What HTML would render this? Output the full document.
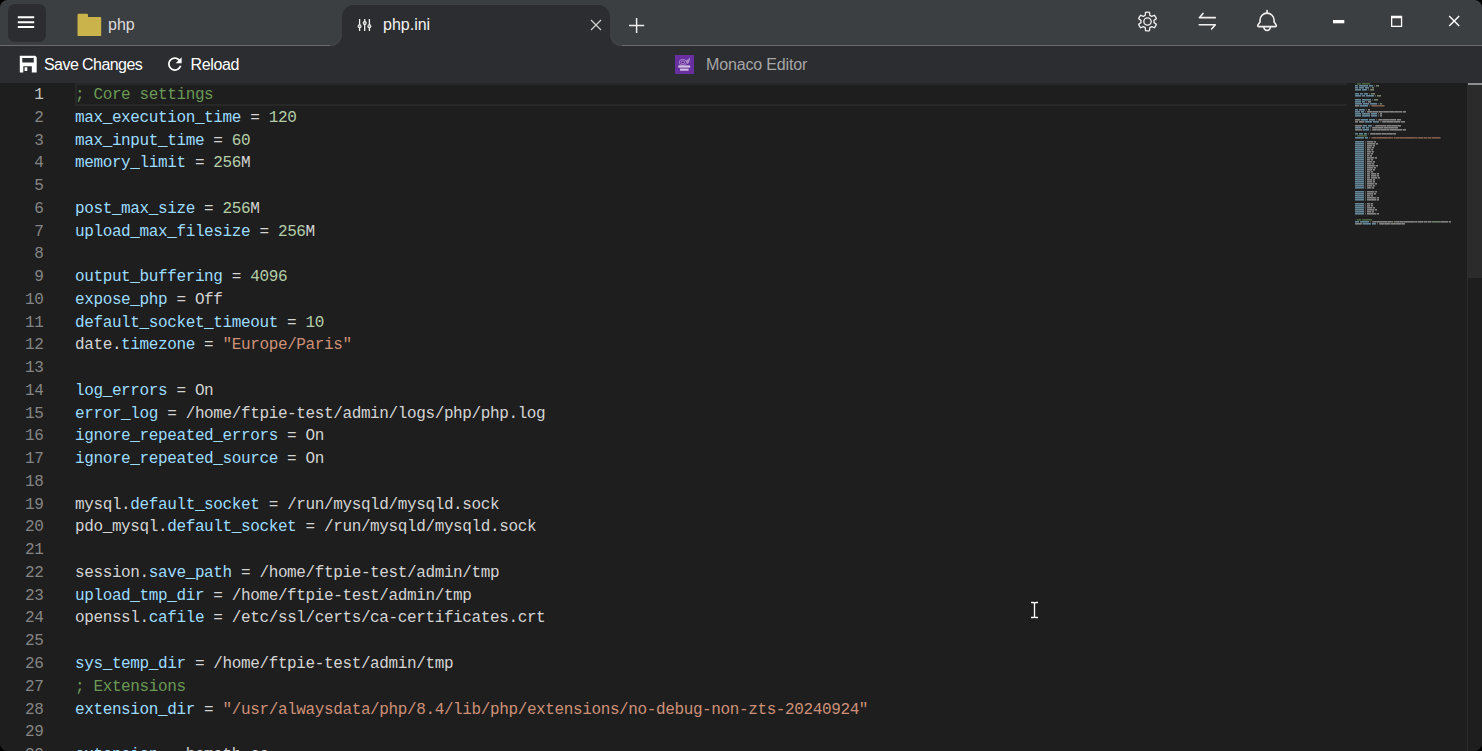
<!DOCTYPE html>
<html><head><meta charset="utf-8">
<style>
html,body{margin:0;padding:0;background:#000;width:1482px;height:751px;overflow:hidden}
.win{position:absolute;left:0;top:0;width:1482px;height:751px;border-radius:8px;overflow:hidden;background:#1e1e1e;font-family:"Liberation Sans",sans-serif}
.tb{position:absolute;left:0;top:0;width:1482px;height:46px;background:#3c3f42}
.tbline{position:absolute;left:0;top:45px;width:1482px;height:1px;background:#67696c}
.menu{position:absolute;left:8px;top:4px;width:38px;height:38px;border-radius:7px;background:#2c2d31}
.tab{position:absolute;left:342px;top:5px;width:268px;height:41px;background:#2c2d31;border-radius:12px 12px 0 0}
.flare{position:absolute;top:34px;width:12px;height:12px;background:#2c2d31;overflow:hidden}
.flare::after{content:"";position:absolute;width:24px;height:24px;border-radius:50%;background:#3c3f42;top:-13px;box-shadow:0 1px 0 0 #4c4e51}
.fl{left:330px}.fl::after{left:-12px}
.fr{left:610px}.fr::after{left:0px}
.ttl{position:absolute;font-size:16px;line-height:16px;white-space:nowrap}
.toolbar{position:absolute;left:0;top:46px;width:1482px;height:37px;background:#2c2d31}
.editor{position:absolute;left:0;top:83px;width:1482px;height:668px;background:#1e1e1e}
.ln{position:absolute;left:75px;height:22.76px;line-height:22.76px;font-family:"Liberation Mono",monospace;font-size:16px;letter-spacing:-0.38px;white-space:pre;color:#d4d4d4}
.lnum{position:absolute;left:0;width:43.5px;text-align:right;height:22.76px;line-height:22.76px;font-family:"Liberation Mono",monospace;font-size:16px;letter-spacing:-0.38px;color:#858585;white-space:pre}
.lnum.act{color:#c6c6c6}
.curline{position:absolute;left:75px;top:83px;width:1270px;height:19px;border:2px solid #282828;border-right:none}
.mm{position:absolute;left:1355px;top:83px;opacity:0.55}
.sbline{position:absolute;left:1467px;top:83px;width:1px;height:668px;background:#2c2c2c}
.slider{position:absolute;left:1468px;top:83px;width:14px;height:195px;background:#2b2b2b}
.sbmark{position:absolute;left:1468px;top:83px;width:14px;height:2px;background:#8f8f8f}
svg{position:absolute;overflow:visible}
</style></head><body>
<div class="win">
  <div class="tb"></div>
  <div class="tbline"></div>
  <div class="menu"></div>
  <svg style="left:0;top:0" width="60" height="46"><g stroke="#fff" stroke-width="2" stroke-linecap="butt"><line x1="17.8" y1="17.2" x2="34.2" y2="17.2"/><line x1="17.8" y1="22.2" x2="34.2" y2="22.2"/><line x1="17.8" y1="27" x2="34.2" y2="27"/></g></svg>
  <svg style="left:0;top:0" width="120" height="46"><path d="M77.5,14.8 Q77.5,13.8 78.5,13.8 H87 Q88,13.8 88,14.8 V17 H100.2 Q101.2,17 101.2,18 V35.2 Q101.2,36.1 100.2,36.1 H78.5 Q77.5,36.1 77.5,35.2 Z" fill="#cbb34b"/></svg>
  <div class="ttl" style="left:108px;top:17px;color:#dcdcdc">php</div>

  <div class="flare fl"></div><div class="flare fr"></div>
  <div class="tab"></div>
  <svg style="left:0;top:0" width="400" height="46"><g stroke="#f2f2f2" stroke-width="1.3" fill="#8a8a8a"><line x1="359.6" y1="19" x2="359.6" y2="31"/><line x1="364.7" y1="19" x2="364.7" y2="31"/><line x1="369.4" y1="19" x2="369.4" y2="31"/><circle cx="359.6" cy="26.3" r="1.5" stroke-width="1.1"/><circle cx="364.7" cy="23.1" r="1.5" stroke-width="1.1"/><circle cx="369.4" cy="26.3" r="1.5" stroke-width="1.1"/></g></svg>
  <div class="ttl" style="left:383px;top:17px;color:#f4f4f4">php.ini</div>
  <svg style="left:0;top:0" width="700" height="46"><g stroke="#cfcfcf" stroke-width="1.3"><line x1="591" y1="20" x2="601" y2="30"/><line x1="601" y1="20" x2="591" y2="30"/></g>
  <g stroke="#ececec" stroke-width="1.5"><line x1="629" y1="25.5" x2="644.2" y2="25.5"/><line x1="636.6" y1="18" x2="636.6" y2="33"/></g></svg>

  <svg style="left:1147px;top:21px" width="1" height="1"><path transform="translate(0.5,0.5)" d="M-2.26,-6.20 L-2.01,-9.08 A9.30,9.30 0 0 1 2.01,-9.08 L2.26,-6.20 A6.60,6.60 0 0 1 4.24,-5.06 L6.86,-6.28 A9.30,9.30 0 0 1 8.87,-2.80 L6.50,-1.15 A6.60,6.60 0 0 1 6.50,1.15 L8.87,2.80 A9.30,9.30 0 0 1 6.86,6.28 L4.24,5.06 A6.60,6.60 0 0 1 2.26,6.20 L2.01,9.08 A9.30,9.30 0 0 1 -2.01,9.08 L-2.26,6.20 A6.60,6.60 0 0 1 -4.24,5.06 L-6.86,6.28 A9.30,9.30 0 0 1 -8.87,2.80 L-6.50,1.15 A6.60,6.60 0 0 1 -6.50,-1.15 L-8.87,-2.80 A9.30,9.30 0 0 1 -6.86,-6.28 L-4.24,-5.06 A6.60,6.60 0 0 1 -2.26,-6.20 Z" fill="none" stroke="#f0f0f0" stroke-width="1.3" stroke-linejoin="round"/><circle cx="0.5" cy="0.5" r="3.7" fill="none" stroke="#f0f0f0" stroke-width="1.3"/></svg>
  <svg style="left:0;top:0" width="1482" height="46"><g fill="none" stroke="#f0f0f0" stroke-width="1.6" stroke-linecap="round" stroke-linejoin="round">
   <path d="M1215.3,17.65 H1199.4 L1203,13.4"/><path d="M1199.2,24.75 H1215.3 L1211.6,29"/>
   <path d="M1267.05,10.6 V12.6"/>
   <path d="M1260,22 V20.2 A7.05,7.05 0 0 1 1274.1,20.2 V22 L1276,24.6 Q1277,26.6 1275,26.6 H1259.1 Q1257.1,26.6 1258.1,24.6 Z"/>
   <path d="M1263.8,26.8 A3.3,3.6 0 0 0 1270.4,26.8"/>
  </g>
  <rect x="1333" y="20" width="11.3" height="3.3" fill="#fff"/>
  <path d="M1391,15.7 H1402.2 V27.1 H1391 Z M1392.3,18.2 V25.8 H1400.9 V18.2 Z" fill="#fff" fill-rule="evenodd"/>
  <g stroke="#fff" stroke-width="1.4"><line x1="1449.2" y1="16.1" x2="1459.2" y2="26.1"/><line x1="1459.2" y1="16.1" x2="1449.2" y2="26.1"/></g>
  </svg>

  <div class="toolbar"></div>
  <svg style="left:0;top:0" width="260" height="84"><path fill-rule="evenodd" fill="#fff" d="M19.8,55.7 H35.2 L36.7,57.2 V72.4 H31.8 V66.2 H23.3 V72.4 H19.8 Z M22.3,57.9 H33.7 V62.5 H22.3 Z M24.6,67.2 H27.3 V70.9 H24.6 Z"/>
  <g transform="translate(164.65,53.9) scale(0.85)"><path fill="#fff" d="M17.65 6.35C16.2 4.9 14.21 4 12 4c-4.42 0-7.990 3.58-7.99 8s3.57 8 7.99 8c3.73 0 6.84-2.55 7.73-6h-2.080c-.82 2.33-3.04 4-5.65 4-3.31 0-6-2.69-6-6s2.69-6 6-6c1.66 0 3.140.69 4.22 1.78L13 11h7V4l-2.35 2.35z"/></g></svg>
  <div class="ttl" style="left:44px;top:57px;color:#fff;letter-spacing:-0.56px">Save Changes</div>
  <div class="ttl" style="left:190.6px;top:57px;color:#fff;letter-spacing:-0.36px">Reload</div>
  <svg style="left:0;top:0" width="700" height="84"><rect x="675" y="55" width="19" height="19" fill="#672f9f"/><g fill="none" stroke="#fff" stroke-width="0.9" opacity="0.45"><ellipse cx="682.8" cy="62.3" rx="3.6" ry="3"/><ellipse cx="682.8" cy="62.3" rx="1.8" ry="1.4"/></g><path d="M686,60.5 Q689,59.5 689.8,57.3 Q690.5,61.5 687.5,64.2 Z" fill="#fff" opacity="0.45"/><g fill="#fff" opacity="0.7"><rect x="678.2" y="65.4" width="12" height="2.2"/><rect x="680" y="68.6" width="8.6" height="2.1"/></g></svg>
  <div class="ttl" style="left:706px;top:57px;color:#a6a6a6;letter-spacing:-0.15px">Monaco Editor</div>

  <div class="editor"></div>
  <div class="curline"></div>
<div class="lnum act" style="top:84.00px">1</div>
<div class="lnum" style="top:106.76px">2</div>
<div class="lnum" style="top:129.52px">3</div>
<div class="lnum" style="top:152.28px">4</div>
<div class="lnum" style="top:175.04px">5</div>
<div class="lnum" style="top:197.80px">6</div>
<div class="lnum" style="top:220.56px">7</div>
<div class="lnum" style="top:243.32px">8</div>
<div class="lnum" style="top:266.08px">9</div>
<div class="lnum" style="top:288.84px">10</div>
<div class="lnum" style="top:311.60px">11</div>
<div class="lnum" style="top:334.36px">12</div>
<div class="lnum" style="top:357.12px">13</div>
<div class="lnum" style="top:379.88px">14</div>
<div class="lnum" style="top:402.64px">15</div>
<div class="lnum" style="top:425.40px">16</div>
<div class="lnum" style="top:448.16px">17</div>
<div class="lnum" style="top:470.92px">18</div>
<div class="lnum" style="top:493.68px">19</div>
<div class="lnum" style="top:516.44px">20</div>
<div class="lnum" style="top:539.20px">21</div>
<div class="lnum" style="top:561.96px">22</div>
<div class="lnum" style="top:584.72px">23</div>
<div class="lnum" style="top:607.48px">24</div>
<div class="lnum" style="top:630.24px">25</div>
<div class="lnum" style="top:653.00px">26</div>
<div class="lnum" style="top:675.76px">27</div>
<div class="lnum" style="top:698.52px">28</div>
<div class="lnum" style="top:721.28px">29</div>
<div class="lnum" style="top:744.04px">30</div>
<div class="lnum" style="top:766.80px">31</div>
<div class="ln" style="top:84.00px"><span style="color:#6a9955">; Core settings</span></div>
<div class="ln" style="top:106.76px"><span style="color:#9cdcfe">max_execution_time</span><span style="color:#d4d4d4"> =</span><span style="color:#d4d4d4"> </span><span style="color:#b5cea8">120</span></div>
<div class="ln" style="top:129.52px"><span style="color:#9cdcfe">max_input_time</span><span style="color:#d4d4d4"> =</span><span style="color:#d4d4d4"> </span><span style="color:#b5cea8">60</span></div>
<div class="ln" style="top:152.28px"><span style="color:#9cdcfe">memory_limit</span><span style="color:#d4d4d4"> =</span><span style="color:#d4d4d4"> </span><span style="color:#b5cea8">256</span><span style="color:#d4d4d4">M</span></div>
<div class="ln" style="top:175.04px"><span style="color:#d4d4d4"></span></div>
<div class="ln" style="top:197.80px"><span style="color:#9cdcfe">post_max_size</span><span style="color:#d4d4d4"> =</span><span style="color:#d4d4d4"> </span><span style="color:#b5cea8">256</span><span style="color:#d4d4d4">M</span></div>
<div class="ln" style="top:220.56px"><span style="color:#9cdcfe">upload_max_filesize</span><span style="color:#d4d4d4"> =</span><span style="color:#d4d4d4"> </span><span style="color:#b5cea8">256</span><span style="color:#d4d4d4">M</span></div>
<div class="ln" style="top:243.32px"><span style="color:#d4d4d4"></span></div>
<div class="ln" style="top:266.08px"><span style="color:#9cdcfe">output_buffering</span><span style="color:#d4d4d4"> =</span><span style="color:#d4d4d4"> </span><span style="color:#b5cea8">4096</span></div>
<div class="ln" style="top:288.84px"><span style="color:#9cdcfe">expose_php</span><span style="color:#d4d4d4"> =</span><span style="color:#d4d4d4"> Off</span></div>
<div class="ln" style="top:311.60px"><span style="color:#9cdcfe">default_socket_timeout</span><span style="color:#d4d4d4"> =</span><span style="color:#d4d4d4"> </span><span style="color:#b5cea8">10</span></div>
<div class="ln" style="top:334.36px"><span style="color:#d4d4d4">date.</span><span style="color:#9cdcfe">timezone</span><span style="color:#d4d4d4"> =</span><span style="color:#d4d4d4"> </span><span style="color:#ce9178">&quot;Europe/Paris&quot;</span></div>
<div class="ln" style="top:357.12px"><span style="color:#d4d4d4"></span></div>
<div class="ln" style="top:379.88px"><span style="color:#9cdcfe">log_errors</span><span style="color:#d4d4d4"> =</span><span style="color:#d4d4d4"> On</span></div>
<div class="ln" style="top:402.64px"><span style="color:#9cdcfe">error_log</span><span style="color:#d4d4d4"> =</span><span style="color:#d4d4d4"> /home/ftpie-test/admin/logs/php/php.log</span></div>
<div class="ln" style="top:425.40px"><span style="color:#9cdcfe">ignore_repeated_errors</span><span style="color:#d4d4d4"> =</span><span style="color:#d4d4d4"> On</span></div>
<div class="ln" style="top:448.16px"><span style="color:#9cdcfe">ignore_repeated_source</span><span style="color:#d4d4d4"> =</span><span style="color:#d4d4d4"> On</span></div>
<div class="ln" style="top:470.92px"><span style="color:#d4d4d4"></span></div>
<div class="ln" style="top:493.68px"><span style="color:#d4d4d4">mysql.</span><span style="color:#9cdcfe">default_socket</span><span style="color:#d4d4d4"> =</span><span style="color:#d4d4d4"> /run/mysqld/mysqld.sock</span></div>
<div class="ln" style="top:516.44px"><span style="color:#d4d4d4">pdo_mysql.</span><span style="color:#9cdcfe">default_socket</span><span style="color:#d4d4d4"> =</span><span style="color:#d4d4d4"> /run/mysqld/mysqld.sock</span></div>
<div class="ln" style="top:539.20px"><span style="color:#d4d4d4"></span></div>
<div class="ln" style="top:561.96px"><span style="color:#d4d4d4">session.</span><span style="color:#9cdcfe">save_path</span><span style="color:#d4d4d4"> =</span><span style="color:#d4d4d4"> /home/ftpie-test/admin/tmp</span></div>
<div class="ln" style="top:584.72px"><span style="color:#9cdcfe">upload_tmp_dir</span><span style="color:#d4d4d4"> =</span><span style="color:#d4d4d4"> /home/ftpie-test/admin/tmp</span></div>
<div class="ln" style="top:607.48px"><span style="color:#d4d4d4">openssl.</span><span style="color:#9cdcfe">cafile</span><span style="color:#d4d4d4"> =</span><span style="color:#d4d4d4"> /etc/ssl/certs/ca-certificates.crt</span></div>
<div class="ln" style="top:630.24px"><span style="color:#d4d4d4"></span></div>
<div class="ln" style="top:653.00px"><span style="color:#9cdcfe">sys_temp_dir</span><span style="color:#d4d4d4"> =</span><span style="color:#d4d4d4"> /home/ftpie-test/admin/tmp</span></div>
<div class="ln" style="top:675.76px"><span style="color:#6a9955">; Extensions</span></div>
<div class="ln" style="top:698.52px"><span style="color:#9cdcfe">extension_dir</span><span style="color:#d4d4d4"> =</span><span style="color:#d4d4d4"> </span><span style="color:#ce9178">&quot;/usr/alwaysdata/php/8.4/lib/php/extensions/no-debug-non-zts-20240924&quot;</span></div>
<div class="ln" style="top:721.28px"><span style="color:#d4d4d4"></span></div>
<div class="ln" style="top:744.04px"><span style="color:#9cdcfe">extension</span><span style="color:#d4d4d4"> =</span><span style="color:#d4d4d4"> bcmath.so</span></div>
<div class="ln" style="top:766.80px"><span style="color:#9cdcfe">extension</span><span style="color:#d4d4d4"> =</span><span style="color:#d4d4d4"> calendar.so</span></div>
<svg class="mm" width="110" height="150" viewBox="0 0 110 150"><rect x="0" y="0" width="1" height="1" fill="#6a9955" fill-opacity="0.35"/><rect x="0" y="1" width="1" height="1" fill="#6a9955" fill-opacity="0.21"/><rect x="2" y="0" width="4" height="1" fill="#6a9955" fill-opacity="1.00"/><rect x="2" y="1" width="4" height="1" fill="#6a9955" fill-opacity="0.60"/><rect x="7" y="0" width="8" height="1" fill="#6a9955" fill-opacity="1.00"/><rect x="7" y="1" width="8" height="1" fill="#6a9955" fill-opacity="0.60"/><rect x="0" y="2" width="3" height="1" fill="#9cdcfe" fill-opacity="1.00"/><rect x="0" y="3" width="3" height="1" fill="#9cdcfe" fill-opacity="0.60"/><rect x="4" y="2" width="9" height="1" fill="#9cdcfe" fill-opacity="1.00"/><rect x="4" y="3" width="9" height="1" fill="#9cdcfe" fill-opacity="0.60"/><rect x="14" y="2" width="4" height="1" fill="#9cdcfe" fill-opacity="1.00"/><rect x="14" y="3" width="4" height="1" fill="#9cdcfe" fill-opacity="0.60"/><rect x="19" y="2" width="1" height="1" fill="#d4d4d4" fill-opacity="0.55"/><rect x="19" y="3" width="1" height="1" fill="#d4d4d4" fill-opacity="0.33"/><rect x="21" y="2" width="3" height="1" fill="#b5cea8" fill-opacity="1.00"/><rect x="21" y="3" width="3" height="1" fill="#b5cea8" fill-opacity="0.60"/><rect x="0" y="4" width="3" height="1" fill="#9cdcfe" fill-opacity="1.00"/><rect x="0" y="5" width="3" height="1" fill="#9cdcfe" fill-opacity="0.60"/><rect x="4" y="4" width="5" height="1" fill="#9cdcfe" fill-opacity="1.00"/><rect x="4" y="5" width="5" height="1" fill="#9cdcfe" fill-opacity="0.60"/><rect x="10" y="4" width="4" height="1" fill="#9cdcfe" fill-opacity="1.00"/><rect x="10" y="5" width="4" height="1" fill="#9cdcfe" fill-opacity="0.60"/><rect x="15" y="4" width="1" height="1" fill="#d4d4d4" fill-opacity="0.55"/><rect x="15" y="5" width="1" height="1" fill="#d4d4d4" fill-opacity="0.33"/><rect x="17" y="4" width="2" height="1" fill="#b5cea8" fill-opacity="1.00"/><rect x="17" y="5" width="2" height="1" fill="#b5cea8" fill-opacity="0.60"/><rect x="0" y="6" width="6" height="1" fill="#9cdcfe" fill-opacity="1.00"/><rect x="0" y="7" width="6" height="1" fill="#9cdcfe" fill-opacity="0.60"/><rect x="7" y="6" width="5" height="1" fill="#9cdcfe" fill-opacity="1.00"/><rect x="7" y="7" width="5" height="1" fill="#9cdcfe" fill-opacity="0.60"/><rect x="13" y="6" width="1" height="1" fill="#d4d4d4" fill-opacity="0.55"/><rect x="13" y="7" width="1" height="1" fill="#d4d4d4" fill-opacity="0.33"/><rect x="15" y="6" width="3" height="1" fill="#b5cea8" fill-opacity="1.00"/><rect x="15" y="7" width="3" height="1" fill="#b5cea8" fill-opacity="0.60"/><rect x="18" y="6" width="1" height="1" fill="#d4d4d4" fill-opacity="1.00"/><rect x="18" y="7" width="1" height="1" fill="#d4d4d4" fill-opacity="0.60"/><rect x="0" y="10" width="4" height="1" fill="#9cdcfe" fill-opacity="1.00"/><rect x="0" y="11" width="4" height="1" fill="#9cdcfe" fill-opacity="0.60"/><rect x="5" y="10" width="3" height="1" fill="#9cdcfe" fill-opacity="1.00"/><rect x="5" y="11" width="3" height="1" fill="#9cdcfe" fill-opacity="0.60"/><rect x="9" y="10" width="4" height="1" fill="#9cdcfe" fill-opacity="1.00"/><rect x="9" y="11" width="4" height="1" fill="#9cdcfe" fill-opacity="0.60"/><rect x="14" y="10" width="1" height="1" fill="#d4d4d4" fill-opacity="0.55"/><rect x="14" y="11" width="1" height="1" fill="#d4d4d4" fill-opacity="0.33"/><rect x="16" y="10" width="3" height="1" fill="#b5cea8" fill-opacity="1.00"/><rect x="16" y="11" width="3" height="1" fill="#b5cea8" fill-opacity="0.60"/><rect x="19" y="10" width="1" height="1" fill="#d4d4d4" fill-opacity="1.00"/><rect x="19" y="11" width="1" height="1" fill="#d4d4d4" fill-opacity="0.60"/><rect x="0" y="12" width="6" height="1" fill="#9cdcfe" fill-opacity="1.00"/><rect x="0" y="13" width="6" height="1" fill="#9cdcfe" fill-opacity="0.60"/><rect x="7" y="12" width="3" height="1" fill="#9cdcfe" fill-opacity="1.00"/><rect x="7" y="13" width="3" height="1" fill="#9cdcfe" fill-opacity="0.60"/><rect x="11" y="12" width="8" height="1" fill="#9cdcfe" fill-opacity="1.00"/><rect x="11" y="13" width="8" height="1" fill="#9cdcfe" fill-opacity="0.60"/><rect x="20" y="12" width="1" height="1" fill="#d4d4d4" fill-opacity="0.55"/><rect x="20" y="13" width="1" height="1" fill="#d4d4d4" fill-opacity="0.33"/><rect x="22" y="12" width="3" height="1" fill="#b5cea8" fill-opacity="1.00"/><rect x="22" y="13" width="3" height="1" fill="#b5cea8" fill-opacity="0.60"/><rect x="25" y="12" width="1" height="1" fill="#d4d4d4" fill-opacity="1.00"/><rect x="25" y="13" width="1" height="1" fill="#d4d4d4" fill-opacity="0.60"/><rect x="0" y="16" width="6" height="1" fill="#9cdcfe" fill-opacity="1.00"/><rect x="0" y="17" width="6" height="1" fill="#9cdcfe" fill-opacity="0.60"/><rect x="7" y="16" width="9" height="1" fill="#9cdcfe" fill-opacity="1.00"/><rect x="7" y="17" width="9" height="1" fill="#9cdcfe" fill-opacity="0.60"/><rect x="17" y="16" width="1" height="1" fill="#d4d4d4" fill-opacity="0.55"/><rect x="17" y="17" width="1" height="1" fill="#d4d4d4" fill-opacity="0.33"/><rect x="19" y="16" width="4" height="1" fill="#b5cea8" fill-opacity="1.00"/><rect x="19" y="17" width="4" height="1" fill="#b5cea8" fill-opacity="0.60"/><rect x="0" y="18" width="6" height="1" fill="#9cdcfe" fill-opacity="1.00"/><rect x="0" y="19" width="6" height="1" fill="#9cdcfe" fill-opacity="0.60"/><rect x="7" y="18" width="3" height="1" fill="#9cdcfe" fill-opacity="1.00"/><rect x="7" y="19" width="3" height="1" fill="#9cdcfe" fill-opacity="0.60"/><rect x="11" y="18" width="1" height="1" fill="#d4d4d4" fill-opacity="0.55"/><rect x="11" y="19" width="1" height="1" fill="#d4d4d4" fill-opacity="0.33"/><rect x="13" y="18" width="3" height="1" fill="#d4d4d4" fill-opacity="1.00"/><rect x="13" y="19" width="3" height="1" fill="#d4d4d4" fill-opacity="0.60"/><rect x="0" y="20" width="7" height="1" fill="#9cdcfe" fill-opacity="1.00"/><rect x="0" y="21" width="7" height="1" fill="#9cdcfe" fill-opacity="0.60"/><rect x="8" y="20" width="6" height="1" fill="#9cdcfe" fill-opacity="1.00"/><rect x="8" y="21" width="6" height="1" fill="#9cdcfe" fill-opacity="0.60"/><rect x="15" y="20" width="7" height="1" fill="#9cdcfe" fill-opacity="1.00"/><rect x="15" y="21" width="7" height="1" fill="#9cdcfe" fill-opacity="0.60"/><rect x="23" y="20" width="1" height="1" fill="#d4d4d4" fill-opacity="0.55"/><rect x="23" y="21" width="1" height="1" fill="#d4d4d4" fill-opacity="0.33"/><rect x="25" y="20" width="2" height="1" fill="#b5cea8" fill-opacity="1.00"/><rect x="25" y="21" width="2" height="1" fill="#b5cea8" fill-opacity="0.60"/><rect x="0" y="22" width="4" height="1" fill="#d4d4d4" fill-opacity="1.00"/><rect x="0" y="23" width="4" height="1" fill="#d4d4d4" fill-opacity="0.60"/><rect x="4" y="22" width="1" height="1" fill="#d4d4d4" fill-opacity="0.35"/><rect x="4" y="23" width="1" height="1" fill="#d4d4d4" fill-opacity="0.21"/><rect x="5" y="22" width="8" height="1" fill="#9cdcfe" fill-opacity="1.00"/><rect x="5" y="23" width="8" height="1" fill="#9cdcfe" fill-opacity="0.60"/><rect x="14" y="22" width="1" height="1" fill="#d4d4d4" fill-opacity="0.55"/><rect x="14" y="23" width="1" height="1" fill="#d4d4d4" fill-opacity="0.33"/><rect x="16" y="22" width="1" height="1" fill="#ce9178" fill-opacity="0.55"/><rect x="16" y="23" width="1" height="1" fill="#ce9178" fill-opacity="0.33"/><rect x="17" y="22" width="6" height="1" fill="#ce9178" fill-opacity="1.00"/><rect x="17" y="23" width="6" height="1" fill="#ce9178" fill-opacity="0.60"/><rect x="23" y="22" width="1" height="1" fill="#ce9178" fill-opacity="0.80"/><rect x="23" y="23" width="1" height="1" fill="#ce9178" fill-opacity="0.48"/><rect x="24" y="22" width="5" height="1" fill="#ce9178" fill-opacity="1.00"/><rect x="24" y="23" width="5" height="1" fill="#ce9178" fill-opacity="0.60"/><rect x="29" y="22" width="1" height="1" fill="#ce9178" fill-opacity="0.55"/><rect x="29" y="23" width="1" height="1" fill="#ce9178" fill-opacity="0.33"/><rect x="0" y="26" width="3" height="1" fill="#9cdcfe" fill-opacity="1.00"/><rect x="0" y="27" width="3" height="1" fill="#9cdcfe" fill-opacity="0.60"/><rect x="4" y="26" width="6" height="1" fill="#9cdcfe" fill-opacity="1.00"/><rect x="4" y="27" width="6" height="1" fill="#9cdcfe" fill-opacity="0.60"/><rect x="11" y="26" width="1" height="1" fill="#d4d4d4" fill-opacity="0.55"/><rect x="11" y="27" width="1" height="1" fill="#d4d4d4" fill-opacity="0.33"/><rect x="13" y="26" width="2" height="1" fill="#d4d4d4" fill-opacity="1.00"/><rect x="13" y="27" width="2" height="1" fill="#d4d4d4" fill-opacity="0.60"/><rect x="0" y="28" width="5" height="1" fill="#9cdcfe" fill-opacity="1.00"/><rect x="0" y="29" width="5" height="1" fill="#9cdcfe" fill-opacity="0.60"/><rect x="6" y="28" width="3" height="1" fill="#9cdcfe" fill-opacity="1.00"/><rect x="6" y="29" width="3" height="1" fill="#9cdcfe" fill-opacity="0.60"/><rect x="10" y="28" width="1" height="1" fill="#d4d4d4" fill-opacity="0.55"/><rect x="10" y="29" width="1" height="1" fill="#d4d4d4" fill-opacity="0.33"/><rect x="12" y="28" width="1" height="1" fill="#d4d4d4" fill-opacity="0.80"/><rect x="12" y="29" width="1" height="1" fill="#d4d4d4" fill-opacity="0.48"/><rect x="13" y="28" width="4" height="1" fill="#d4d4d4" fill-opacity="1.00"/><rect x="13" y="29" width="4" height="1" fill="#d4d4d4" fill-opacity="0.60"/><rect x="17" y="28" width="1" height="1" fill="#d4d4d4" fill-opacity="0.80"/><rect x="17" y="29" width="1" height="1" fill="#d4d4d4" fill-opacity="0.48"/><rect x="18" y="28" width="5" height="1" fill="#d4d4d4" fill-opacity="1.00"/><rect x="18" y="29" width="5" height="1" fill="#d4d4d4" fill-opacity="0.60"/><rect x="23" y="28" width="1" height="1" fill="#d4d4d4" fill-opacity="0.55"/><rect x="23" y="29" width="1" height="1" fill="#d4d4d4" fill-opacity="0.33"/><rect x="24" y="28" width="4" height="1" fill="#d4d4d4" fill-opacity="1.00"/><rect x="24" y="29" width="4" height="1" fill="#d4d4d4" fill-opacity="0.60"/><rect x="28" y="28" width="1" height="1" fill="#d4d4d4" fill-opacity="0.80"/><rect x="28" y="29" width="1" height="1" fill="#d4d4d4" fill-opacity="0.48"/><rect x="29" y="28" width="5" height="1" fill="#d4d4d4" fill-opacity="1.00"/><rect x="29" y="29" width="5" height="1" fill="#d4d4d4" fill-opacity="0.60"/><rect x="34" y="28" width="1" height="1" fill="#d4d4d4" fill-opacity="0.80"/><rect x="34" y="29" width="1" height="1" fill="#d4d4d4" fill-opacity="0.48"/><rect x="35" y="28" width="4" height="1" fill="#d4d4d4" fill-opacity="1.00"/><rect x="35" y="29" width="4" height="1" fill="#d4d4d4" fill-opacity="0.60"/><rect x="39" y="28" width="1" height="1" fill="#d4d4d4" fill-opacity="0.80"/><rect x="39" y="29" width="1" height="1" fill="#d4d4d4" fill-opacity="0.48"/><rect x="40" y="28" width="3" height="1" fill="#d4d4d4" fill-opacity="1.00"/><rect x="40" y="29" width="3" height="1" fill="#d4d4d4" fill-opacity="0.60"/><rect x="43" y="28" width="1" height="1" fill="#d4d4d4" fill-opacity="0.80"/><rect x="43" y="29" width="1" height="1" fill="#d4d4d4" fill-opacity="0.48"/><rect x="44" y="28" width="3" height="1" fill="#d4d4d4" fill-opacity="1.00"/><rect x="44" y="29" width="3" height="1" fill="#d4d4d4" fill-opacity="0.60"/><rect x="47" y="28" width="1" height="1" fill="#d4d4d4" fill-opacity="0.35"/><rect x="47" y="29" width="1" height="1" fill="#d4d4d4" fill-opacity="0.21"/><rect x="48" y="28" width="3" height="1" fill="#d4d4d4" fill-opacity="1.00"/><rect x="48" y="29" width="3" height="1" fill="#d4d4d4" fill-opacity="0.60"/><rect x="0" y="30" width="6" height="1" fill="#9cdcfe" fill-opacity="1.00"/><rect x="0" y="31" width="6" height="1" fill="#9cdcfe" fill-opacity="0.60"/><rect x="7" y="30" width="8" height="1" fill="#9cdcfe" fill-opacity="1.00"/><rect x="7" y="31" width="8" height="1" fill="#9cdcfe" fill-opacity="0.60"/><rect x="16" y="30" width="6" height="1" fill="#9cdcfe" fill-opacity="1.00"/><rect x="16" y="31" width="6" height="1" fill="#9cdcfe" fill-opacity="0.60"/><rect x="23" y="30" width="1" height="1" fill="#d4d4d4" fill-opacity="0.55"/><rect x="23" y="31" width="1" height="1" fill="#d4d4d4" fill-opacity="0.33"/><rect x="25" y="30" width="2" height="1" fill="#d4d4d4" fill-opacity="1.00"/><rect x="25" y="31" width="2" height="1" fill="#d4d4d4" fill-opacity="0.60"/><rect x="0" y="32" width="6" height="1" fill="#9cdcfe" fill-opacity="1.00"/><rect x="0" y="33" width="6" height="1" fill="#9cdcfe" fill-opacity="0.60"/><rect x="7" y="32" width="8" height="1" fill="#9cdcfe" fill-opacity="1.00"/><rect x="7" y="33" width="8" height="1" fill="#9cdcfe" fill-opacity="0.60"/><rect x="16" y="32" width="6" height="1" fill="#9cdcfe" fill-opacity="1.00"/><rect x="16" y="33" width="6" height="1" fill="#9cdcfe" fill-opacity="0.60"/><rect x="23" y="32" width="1" height="1" fill="#d4d4d4" fill-opacity="0.55"/><rect x="23" y="33" width="1" height="1" fill="#d4d4d4" fill-opacity="0.33"/><rect x="25" y="32" width="2" height="1" fill="#d4d4d4" fill-opacity="1.00"/><rect x="25" y="33" width="2" height="1" fill="#d4d4d4" fill-opacity="0.60"/><rect x="0" y="36" width="5" height="1" fill="#d4d4d4" fill-opacity="1.00"/><rect x="0" y="37" width="5" height="1" fill="#d4d4d4" fill-opacity="0.60"/><rect x="5" y="36" width="1" height="1" fill="#d4d4d4" fill-opacity="0.35"/><rect x="5" y="37" width="1" height="1" fill="#d4d4d4" fill-opacity="0.21"/><rect x="6" y="36" width="7" height="1" fill="#9cdcfe" fill-opacity="1.00"/><rect x="6" y="37" width="7" height="1" fill="#9cdcfe" fill-opacity="0.60"/><rect x="14" y="36" width="6" height="1" fill="#9cdcfe" fill-opacity="1.00"/><rect x="14" y="37" width="6" height="1" fill="#9cdcfe" fill-opacity="0.60"/><rect x="21" y="36" width="1" height="1" fill="#d4d4d4" fill-opacity="0.55"/><rect x="21" y="37" width="1" height="1" fill="#d4d4d4" fill-opacity="0.33"/><rect x="23" y="36" width="1" height="1" fill="#d4d4d4" fill-opacity="0.80"/><rect x="23" y="37" width="1" height="1" fill="#d4d4d4" fill-opacity="0.48"/><rect x="24" y="36" width="3" height="1" fill="#d4d4d4" fill-opacity="1.00"/><rect x="24" y="37" width="3" height="1" fill="#d4d4d4" fill-opacity="0.60"/><rect x="27" y="36" width="1" height="1" fill="#d4d4d4" fill-opacity="0.80"/><rect x="27" y="37" width="1" height="1" fill="#d4d4d4" fill-opacity="0.48"/><rect x="28" y="36" width="6" height="1" fill="#d4d4d4" fill-opacity="1.00"/><rect x="28" y="37" width="6" height="1" fill="#d4d4d4" fill-opacity="0.60"/><rect x="34" y="36" width="1" height="1" fill="#d4d4d4" fill-opacity="0.80"/><rect x="34" y="37" width="1" height="1" fill="#d4d4d4" fill-opacity="0.48"/><rect x="35" y="36" width="6" height="1" fill="#d4d4d4" fill-opacity="1.00"/><rect x="35" y="37" width="6" height="1" fill="#d4d4d4" fill-opacity="0.60"/><rect x="41" y="36" width="1" height="1" fill="#d4d4d4" fill-opacity="0.35"/><rect x="41" y="37" width="1" height="1" fill="#d4d4d4" fill-opacity="0.21"/><rect x="42" y="36" width="4" height="1" fill="#d4d4d4" fill-opacity="1.00"/><rect x="42" y="37" width="4" height="1" fill="#d4d4d4" fill-opacity="0.60"/><rect x="0" y="38" width="3" height="1" fill="#d4d4d4" fill-opacity="1.00"/><rect x="0" y="39" width="3" height="1" fill="#d4d4d4" fill-opacity="0.60"/><rect x="4" y="38" width="5" height="1" fill="#d4d4d4" fill-opacity="1.00"/><rect x="4" y="39" width="5" height="1" fill="#d4d4d4" fill-opacity="0.60"/><rect x="9" y="38" width="1" height="1" fill="#d4d4d4" fill-opacity="0.35"/><rect x="9" y="39" width="1" height="1" fill="#d4d4d4" fill-opacity="0.21"/><rect x="10" y="38" width="7" height="1" fill="#9cdcfe" fill-opacity="1.00"/><rect x="10" y="39" width="7" height="1" fill="#9cdcfe" fill-opacity="0.60"/><rect x="18" y="38" width="6" height="1" fill="#9cdcfe" fill-opacity="1.00"/><rect x="18" y="39" width="6" height="1" fill="#9cdcfe" fill-opacity="0.60"/><rect x="25" y="38" width="1" height="1" fill="#d4d4d4" fill-opacity="0.55"/><rect x="25" y="39" width="1" height="1" fill="#d4d4d4" fill-opacity="0.33"/><rect x="27" y="38" width="1" height="1" fill="#d4d4d4" fill-opacity="0.80"/><rect x="27" y="39" width="1" height="1" fill="#d4d4d4" fill-opacity="0.48"/><rect x="28" y="38" width="3" height="1" fill="#d4d4d4" fill-opacity="1.00"/><rect x="28" y="39" width="3" height="1" fill="#d4d4d4" fill-opacity="0.60"/><rect x="31" y="38" width="1" height="1" fill="#d4d4d4" fill-opacity="0.80"/><rect x="31" y="39" width="1" height="1" fill="#d4d4d4" fill-opacity="0.48"/><rect x="32" y="38" width="6" height="1" fill="#d4d4d4" fill-opacity="1.00"/><rect x="32" y="39" width="6" height="1" fill="#d4d4d4" fill-opacity="0.60"/><rect x="38" y="38" width="1" height="1" fill="#d4d4d4" fill-opacity="0.80"/><rect x="38" y="39" width="1" height="1" fill="#d4d4d4" fill-opacity="0.48"/><rect x="39" y="38" width="6" height="1" fill="#d4d4d4" fill-opacity="1.00"/><rect x="39" y="39" width="6" height="1" fill="#d4d4d4" fill-opacity="0.60"/><rect x="45" y="38" width="1" height="1" fill="#d4d4d4" fill-opacity="0.35"/><rect x="45" y="39" width="1" height="1" fill="#d4d4d4" fill-opacity="0.21"/><rect x="46" y="38" width="4" height="1" fill="#d4d4d4" fill-opacity="1.00"/><rect x="46" y="39" width="4" height="1" fill="#d4d4d4" fill-opacity="0.60"/><rect x="0" y="42" width="7" height="1" fill="#d4d4d4" fill-opacity="1.00"/><rect x="0" y="43" width="7" height="1" fill="#d4d4d4" fill-opacity="0.60"/><rect x="7" y="42" width="1" height="1" fill="#d4d4d4" fill-opacity="0.35"/><rect x="7" y="43" width="1" height="1" fill="#d4d4d4" fill-opacity="0.21"/><rect x="8" y="42" width="4" height="1" fill="#9cdcfe" fill-opacity="1.00"/><rect x="8" y="43" width="4" height="1" fill="#9cdcfe" fill-opacity="0.60"/><rect x="13" y="42" width="4" height="1" fill="#9cdcfe" fill-opacity="1.00"/><rect x="13" y="43" width="4" height="1" fill="#9cdcfe" fill-opacity="0.60"/><rect x="18" y="42" width="1" height="1" fill="#d4d4d4" fill-opacity="0.55"/><rect x="18" y="43" width="1" height="1" fill="#d4d4d4" fill-opacity="0.33"/><rect x="20" y="42" width="1" height="1" fill="#d4d4d4" fill-opacity="0.80"/><rect x="20" y="43" width="1" height="1" fill="#d4d4d4" fill-opacity="0.48"/><rect x="21" y="42" width="4" height="1" fill="#d4d4d4" fill-opacity="1.00"/><rect x="21" y="43" width="4" height="1" fill="#d4d4d4" fill-opacity="0.60"/><rect x="25" y="42" width="1" height="1" fill="#d4d4d4" fill-opacity="0.80"/><rect x="25" y="43" width="1" height="1" fill="#d4d4d4" fill-opacity="0.48"/><rect x="26" y="42" width="5" height="1" fill="#d4d4d4" fill-opacity="1.00"/><rect x="26" y="43" width="5" height="1" fill="#d4d4d4" fill-opacity="0.60"/><rect x="31" y="42" width="1" height="1" fill="#d4d4d4" fill-opacity="0.55"/><rect x="31" y="43" width="1" height="1" fill="#d4d4d4" fill-opacity="0.33"/><rect x="32" y="42" width="4" height="1" fill="#d4d4d4" fill-opacity="1.00"/><rect x="32" y="43" width="4" height="1" fill="#d4d4d4" fill-opacity="0.60"/><rect x="36" y="42" width="1" height="1" fill="#d4d4d4" fill-opacity="0.80"/><rect x="36" y="43" width="1" height="1" fill="#d4d4d4" fill-opacity="0.48"/><rect x="37" y="42" width="5" height="1" fill="#d4d4d4" fill-opacity="1.00"/><rect x="37" y="43" width="5" height="1" fill="#d4d4d4" fill-opacity="0.60"/><rect x="42" y="42" width="1" height="1" fill="#d4d4d4" fill-opacity="0.80"/><rect x="42" y="43" width="1" height="1" fill="#d4d4d4" fill-opacity="0.48"/><rect x="43" y="42" width="3" height="1" fill="#d4d4d4" fill-opacity="1.00"/><rect x="43" y="43" width="3" height="1" fill="#d4d4d4" fill-opacity="0.60"/><rect x="0" y="44" width="6" height="1" fill="#9cdcfe" fill-opacity="1.00"/><rect x="0" y="45" width="6" height="1" fill="#9cdcfe" fill-opacity="0.60"/><rect x="7" y="44" width="3" height="1" fill="#9cdcfe" fill-opacity="1.00"/><rect x="7" y="45" width="3" height="1" fill="#9cdcfe" fill-opacity="0.60"/><rect x="11" y="44" width="3" height="1" fill="#9cdcfe" fill-opacity="1.00"/><rect x="11" y="45" width="3" height="1" fill="#9cdcfe" fill-opacity="0.60"/><rect x="15" y="44" width="1" height="1" fill="#d4d4d4" fill-opacity="0.55"/><rect x="15" y="45" width="1" height="1" fill="#d4d4d4" fill-opacity="0.33"/><rect x="17" y="44" width="1" height="1" fill="#d4d4d4" fill-opacity="0.80"/><rect x="17" y="45" width="1" height="1" fill="#d4d4d4" fill-opacity="0.48"/><rect x="18" y="44" width="4" height="1" fill="#d4d4d4" fill-opacity="1.00"/><rect x="18" y="45" width="4" height="1" fill="#d4d4d4" fill-opacity="0.60"/><rect x="22" y="44" width="1" height="1" fill="#d4d4d4" fill-opacity="0.80"/><rect x="22" y="45" width="1" height="1" fill="#d4d4d4" fill-opacity="0.48"/><rect x="23" y="44" width="5" height="1" fill="#d4d4d4" fill-opacity="1.00"/><rect x="23" y="45" width="5" height="1" fill="#d4d4d4" fill-opacity="0.60"/><rect x="28" y="44" width="1" height="1" fill="#d4d4d4" fill-opacity="0.55"/><rect x="28" y="45" width="1" height="1" fill="#d4d4d4" fill-opacity="0.33"/><rect x="29" y="44" width="4" height="1" fill="#d4d4d4" fill-opacity="1.00"/><rect x="29" y="45" width="4" height="1" fill="#d4d4d4" fill-opacity="0.60"/><rect x="33" y="44" width="1" height="1" fill="#d4d4d4" fill-opacity="0.80"/><rect x="33" y="45" width="1" height="1" fill="#d4d4d4" fill-opacity="0.48"/><rect x="34" y="44" width="5" height="1" fill="#d4d4d4" fill-opacity="1.00"/><rect x="34" y="45" width="5" height="1" fill="#d4d4d4" fill-opacity="0.60"/><rect x="39" y="44" width="1" height="1" fill="#d4d4d4" fill-opacity="0.80"/><rect x="39" y="45" width="1" height="1" fill="#d4d4d4" fill-opacity="0.48"/><rect x="40" y="44" width="3" height="1" fill="#d4d4d4" fill-opacity="1.00"/><rect x="40" y="45" width="3" height="1" fill="#d4d4d4" fill-opacity="0.60"/><rect x="0" y="46" width="7" height="1" fill="#d4d4d4" fill-opacity="1.00"/><rect x="0" y="47" width="7" height="1" fill="#d4d4d4" fill-opacity="0.60"/><rect x="7" y="46" width="1" height="1" fill="#d4d4d4" fill-opacity="0.35"/><rect x="7" y="47" width="1" height="1" fill="#d4d4d4" fill-opacity="0.21"/><rect x="8" y="46" width="6" height="1" fill="#9cdcfe" fill-opacity="1.00"/><rect x="8" y="47" width="6" height="1" fill="#9cdcfe" fill-opacity="0.60"/><rect x="15" y="46" width="1" height="1" fill="#d4d4d4" fill-opacity="0.55"/><rect x="15" y="47" width="1" height="1" fill="#d4d4d4" fill-opacity="0.33"/><rect x="17" y="46" width="1" height="1" fill="#d4d4d4" fill-opacity="0.80"/><rect x="17" y="47" width="1" height="1" fill="#d4d4d4" fill-opacity="0.48"/><rect x="18" y="46" width="3" height="1" fill="#d4d4d4" fill-opacity="1.00"/><rect x="18" y="47" width="3" height="1" fill="#d4d4d4" fill-opacity="0.60"/><rect x="21" y="46" width="1" height="1" fill="#d4d4d4" fill-opacity="0.80"/><rect x="21" y="47" width="1" height="1" fill="#d4d4d4" fill-opacity="0.48"/><rect x="22" y="46" width="3" height="1" fill="#d4d4d4" fill-opacity="1.00"/><rect x="22" y="47" width="3" height="1" fill="#d4d4d4" fill-opacity="0.60"/><rect x="25" y="46" width="1" height="1" fill="#d4d4d4" fill-opacity="0.80"/><rect x="25" y="47" width="1" height="1" fill="#d4d4d4" fill-opacity="0.48"/><rect x="26" y="46" width="5" height="1" fill="#d4d4d4" fill-opacity="1.00"/><rect x="26" y="47" width="5" height="1" fill="#d4d4d4" fill-opacity="0.60"/><rect x="31" y="46" width="1" height="1" fill="#d4d4d4" fill-opacity="0.80"/><rect x="31" y="47" width="1" height="1" fill="#d4d4d4" fill-opacity="0.48"/><rect x="32" y="46" width="2" height="1" fill="#d4d4d4" fill-opacity="1.00"/><rect x="32" y="47" width="2" height="1" fill="#d4d4d4" fill-opacity="0.60"/><rect x="34" y="46" width="1" height="1" fill="#d4d4d4" fill-opacity="0.55"/><rect x="34" y="47" width="1" height="1" fill="#d4d4d4" fill-opacity="0.33"/><rect x="35" y="46" width="12" height="1" fill="#d4d4d4" fill-opacity="1.00"/><rect x="35" y="47" width="12" height="1" fill="#d4d4d4" fill-opacity="0.60"/><rect x="47" y="46" width="1" height="1" fill="#d4d4d4" fill-opacity="0.35"/><rect x="47" y="47" width="1" height="1" fill="#d4d4d4" fill-opacity="0.21"/><rect x="48" y="46" width="3" height="1" fill="#d4d4d4" fill-opacity="1.00"/><rect x="48" y="47" width="3" height="1" fill="#d4d4d4" fill-opacity="0.60"/><rect x="0" y="50" width="3" height="1" fill="#9cdcfe" fill-opacity="1.00"/><rect x="0" y="51" width="3" height="1" fill="#9cdcfe" fill-opacity="0.60"/><rect x="4" y="50" width="4" height="1" fill="#9cdcfe" fill-opacity="1.00"/><rect x="4" y="51" width="4" height="1" fill="#9cdcfe" fill-opacity="0.60"/><rect x="9" y="50" width="3" height="1" fill="#9cdcfe" fill-opacity="1.00"/><rect x="9" y="51" width="3" height="1" fill="#9cdcfe" fill-opacity="0.60"/><rect x="13" y="50" width="1" height="1" fill="#d4d4d4" fill-opacity="0.55"/><rect x="13" y="51" width="1" height="1" fill="#d4d4d4" fill-opacity="0.33"/><rect x="15" y="50" width="1" height="1" fill="#d4d4d4" fill-opacity="0.80"/><rect x="15" y="51" width="1" height="1" fill="#d4d4d4" fill-opacity="0.48"/><rect x="16" y="50" width="4" height="1" fill="#d4d4d4" fill-opacity="1.00"/><rect x="16" y="51" width="4" height="1" fill="#d4d4d4" fill-opacity="0.60"/><rect x="20" y="50" width="1" height="1" fill="#d4d4d4" fill-opacity="0.80"/><rect x="20" y="51" width="1" height="1" fill="#d4d4d4" fill-opacity="0.48"/><rect x="21" y="50" width="5" height="1" fill="#d4d4d4" fill-opacity="1.00"/><rect x="21" y="51" width="5" height="1" fill="#d4d4d4" fill-opacity="0.60"/><rect x="26" y="50" width="1" height="1" fill="#d4d4d4" fill-opacity="0.55"/><rect x="26" y="51" width="1" height="1" fill="#d4d4d4" fill-opacity="0.33"/><rect x="27" y="50" width="4" height="1" fill="#d4d4d4" fill-opacity="1.00"/><rect x="27" y="51" width="4" height="1" fill="#d4d4d4" fill-opacity="0.60"/><rect x="31" y="50" width="1" height="1" fill="#d4d4d4" fill-opacity="0.80"/><rect x="31" y="51" width="1" height="1" fill="#d4d4d4" fill-opacity="0.48"/><rect x="32" y="50" width="5" height="1" fill="#d4d4d4" fill-opacity="1.00"/><rect x="32" y="51" width="5" height="1" fill="#d4d4d4" fill-opacity="0.60"/><rect x="37" y="50" width="1" height="1" fill="#d4d4d4" fill-opacity="0.80"/><rect x="37" y="51" width="1" height="1" fill="#d4d4d4" fill-opacity="0.48"/><rect x="38" y="50" width="3" height="1" fill="#d4d4d4" fill-opacity="1.00"/><rect x="38" y="51" width="3" height="1" fill="#d4d4d4" fill-opacity="0.60"/><rect x="0" y="52" width="1" height="1" fill="#6a9955" fill-opacity="0.35"/><rect x="0" y="53" width="1" height="1" fill="#6a9955" fill-opacity="0.21"/><rect x="2" y="52" width="10" height="1" fill="#6a9955" fill-opacity="1.00"/><rect x="2" y="53" width="10" height="1" fill="#6a9955" fill-opacity="0.60"/><rect x="0" y="54" width="9" height="1" fill="#9cdcfe" fill-opacity="1.00"/><rect x="0" y="55" width="9" height="1" fill="#9cdcfe" fill-opacity="0.60"/><rect x="10" y="54" width="3" height="1" fill="#9cdcfe" fill-opacity="1.00"/><rect x="10" y="55" width="3" height="1" fill="#9cdcfe" fill-opacity="0.60"/><rect x="14" y="54" width="1" height="1" fill="#d4d4d4" fill-opacity="0.55"/><rect x="14" y="55" width="1" height="1" fill="#d4d4d4" fill-opacity="0.33"/><rect x="16" y="54" width="1" height="1" fill="#ce9178" fill-opacity="0.55"/><rect x="16" y="55" width="1" height="1" fill="#ce9178" fill-opacity="0.33"/><rect x="17" y="54" width="1" height="1" fill="#ce9178" fill-opacity="0.80"/><rect x="17" y="55" width="1" height="1" fill="#ce9178" fill-opacity="0.48"/><rect x="18" y="54" width="3" height="1" fill="#ce9178" fill-opacity="1.00"/><rect x="18" y="55" width="3" height="1" fill="#ce9178" fill-opacity="0.60"/><rect x="21" y="54" width="1" height="1" fill="#ce9178" fill-opacity="0.80"/><rect x="21" y="55" width="1" height="1" fill="#ce9178" fill-opacity="0.48"/><rect x="22" y="54" width="10" height="1" fill="#ce9178" fill-opacity="1.00"/><rect x="22" y="55" width="10" height="1" fill="#ce9178" fill-opacity="0.60"/><rect x="32" y="54" width="1" height="1" fill="#ce9178" fill-opacity="0.80"/><rect x="32" y="55" width="1" height="1" fill="#ce9178" fill-opacity="0.48"/><rect x="33" y="54" width="3" height="1" fill="#ce9178" fill-opacity="1.00"/><rect x="33" y="55" width="3" height="1" fill="#ce9178" fill-opacity="0.60"/><rect x="36" y="54" width="1" height="1" fill="#ce9178" fill-opacity="0.80"/><rect x="36" y="55" width="1" height="1" fill="#ce9178" fill-opacity="0.48"/><rect x="37" y="54" width="1" height="1" fill="#ce9178" fill-opacity="1.00"/><rect x="37" y="55" width="1" height="1" fill="#ce9178" fill-opacity="0.60"/><rect x="38" y="54" width="1" height="1" fill="#ce9178" fill-opacity="0.35"/><rect x="38" y="55" width="1" height="1" fill="#ce9178" fill-opacity="0.21"/><rect x="39" y="54" width="1" height="1" fill="#ce9178" fill-opacity="1.00"/><rect x="39" y="55" width="1" height="1" fill="#ce9178" fill-opacity="0.60"/><rect x="40" y="54" width="1" height="1" fill="#ce9178" fill-opacity="0.80"/><rect x="40" y="55" width="1" height="1" fill="#ce9178" fill-opacity="0.48"/><rect x="41" y="54" width="3" height="1" fill="#ce9178" fill-opacity="1.00"/><rect x="41" y="55" width="3" height="1" fill="#ce9178" fill-opacity="0.60"/><rect x="44" y="54" width="1" height="1" fill="#ce9178" fill-opacity="0.80"/><rect x="44" y="55" width="1" height="1" fill="#ce9178" fill-opacity="0.48"/><rect x="45" y="54" width="3" height="1" fill="#ce9178" fill-opacity="1.00"/><rect x="45" y="55" width="3" height="1" fill="#ce9178" fill-opacity="0.60"/><rect x="48" y="54" width="1" height="1" fill="#ce9178" fill-opacity="0.80"/><rect x="48" y="55" width="1" height="1" fill="#ce9178" fill-opacity="0.48"/><rect x="49" y="54" width="10" height="1" fill="#ce9178" fill-opacity="1.00"/><rect x="49" y="55" width="10" height="1" fill="#ce9178" fill-opacity="0.60"/><rect x="59" y="54" width="1" height="1" fill="#ce9178" fill-opacity="0.80"/><rect x="59" y="55" width="1" height="1" fill="#ce9178" fill-opacity="0.48"/><rect x="60" y="54" width="2" height="1" fill="#ce9178" fill-opacity="1.00"/><rect x="60" y="55" width="2" height="1" fill="#ce9178" fill-opacity="0.60"/><rect x="62" y="54" width="1" height="1" fill="#ce9178" fill-opacity="0.55"/><rect x="62" y="55" width="1" height="1" fill="#ce9178" fill-opacity="0.33"/><rect x="63" y="54" width="5" height="1" fill="#ce9178" fill-opacity="1.00"/><rect x="63" y="55" width="5" height="1" fill="#ce9178" fill-opacity="0.60"/><rect x="68" y="54" width="1" height="1" fill="#ce9178" fill-opacity="0.55"/><rect x="68" y="55" width="1" height="1" fill="#ce9178" fill-opacity="0.33"/><rect x="69" y="54" width="3" height="1" fill="#ce9178" fill-opacity="1.00"/><rect x="69" y="55" width="3" height="1" fill="#ce9178" fill-opacity="0.60"/><rect x="72" y="54" width="1" height="1" fill="#ce9178" fill-opacity="0.55"/><rect x="72" y="55" width="1" height="1" fill="#ce9178" fill-opacity="0.33"/><rect x="73" y="54" width="3" height="1" fill="#ce9178" fill-opacity="1.00"/><rect x="73" y="55" width="3" height="1" fill="#ce9178" fill-opacity="0.60"/><rect x="76" y="54" width="1" height="1" fill="#ce9178" fill-opacity="0.55"/><rect x="76" y="55" width="1" height="1" fill="#ce9178" fill-opacity="0.33"/><rect x="77" y="54" width="8" height="1" fill="#ce9178" fill-opacity="1.00"/><rect x="77" y="55" width="8" height="1" fill="#ce9178" fill-opacity="0.60"/><rect x="85" y="54" width="1" height="1" fill="#ce9178" fill-opacity="0.55"/><rect x="85" y="55" width="1" height="1" fill="#ce9178" fill-opacity="0.33"/><rect x="0" y="58" width="9" height="1" fill="#9cdcfe" fill-opacity="1.00"/><rect x="0" y="59" width="9" height="1" fill="#9cdcfe" fill-opacity="0.60"/><rect x="10" y="58" width="1" height="1" fill="#d4d4d4" fill-opacity="0.55"/><rect x="10" y="59" width="1" height="1" fill="#d4d4d4" fill-opacity="0.33"/><rect x="12" y="58" width="6" height="1" fill="#d4d4d4" fill-opacity="1.00"/><rect x="12" y="59" width="6" height="1" fill="#d4d4d4" fill-opacity="0.60"/><rect x="18" y="58" width="1" height="1" fill="#d4d4d4" fill-opacity="0.35"/><rect x="18" y="59" width="1" height="1" fill="#d4d4d4" fill-opacity="0.21"/><rect x="19" y="58" width="2" height="1" fill="#d4d4d4" fill-opacity="1.00"/><rect x="19" y="59" width="2" height="1" fill="#d4d4d4" fill-opacity="0.60"/><rect x="0" y="60" width="9" height="1" fill="#9cdcfe" fill-opacity="1.00"/><rect x="0" y="61" width="9" height="1" fill="#9cdcfe" fill-opacity="0.60"/><rect x="10" y="60" width="1" height="1" fill="#d4d4d4" fill-opacity="0.55"/><rect x="10" y="61" width="1" height="1" fill="#d4d4d4" fill-opacity="0.33"/><rect x="12" y="60" width="8" height="1" fill="#d4d4d4" fill-opacity="1.00"/><rect x="12" y="61" width="8" height="1" fill="#d4d4d4" fill-opacity="0.60"/><rect x="20" y="60" width="1" height="1" fill="#d4d4d4" fill-opacity="0.35"/><rect x="20" y="61" width="1" height="1" fill="#d4d4d4" fill-opacity="0.21"/><rect x="21" y="60" width="2" height="1" fill="#d4d4d4" fill-opacity="1.00"/><rect x="21" y="61" width="2" height="1" fill="#d4d4d4" fill-opacity="0.60"/><rect x="0" y="62" width="9" height="1" fill="#9cdcfe" fill-opacity="1.00"/><rect x="0" y="63" width="9" height="1" fill="#9cdcfe" fill-opacity="0.60"/><rect x="10" y="62" width="1" height="1" fill="#d4d4d4" fill-opacity="0.55"/><rect x="10" y="63" width="1" height="1" fill="#d4d4d4" fill-opacity="0.33"/><rect x="12" y="62" width="5" height="1" fill="#d4d4d4" fill-opacity="1.00"/><rect x="12" y="63" width="5" height="1" fill="#d4d4d4" fill-opacity="0.60"/><rect x="17" y="62" width="1" height="1" fill="#d4d4d4" fill-opacity="0.35"/><rect x="17" y="63" width="1" height="1" fill="#d4d4d4" fill-opacity="0.21"/><rect x="18" y="62" width="2" height="1" fill="#d4d4d4" fill-opacity="1.00"/><rect x="18" y="63" width="2" height="1" fill="#d4d4d4" fill-opacity="0.60"/><rect x="0" y="64" width="9" height="1" fill="#9cdcfe" fill-opacity="1.00"/><rect x="0" y="65" width="9" height="1" fill="#9cdcfe" fill-opacity="0.60"/><rect x="10" y="64" width="1" height="1" fill="#d4d4d4" fill-opacity="0.55"/><rect x="10" y="65" width="1" height="1" fill="#d4d4d4" fill-opacity="0.33"/><rect x="12" y="64" width="4" height="1" fill="#d4d4d4" fill-opacity="1.00"/><rect x="12" y="65" width="4" height="1" fill="#d4d4d4" fill-opacity="0.60"/><rect x="16" y="64" width="1" height="1" fill="#d4d4d4" fill-opacity="0.35"/><rect x="16" y="65" width="1" height="1" fill="#d4d4d4" fill-opacity="0.21"/><rect x="17" y="64" width="2" height="1" fill="#d4d4d4" fill-opacity="1.00"/><rect x="17" y="65" width="2" height="1" fill="#d4d4d4" fill-opacity="0.60"/><rect x="0" y="66" width="9" height="1" fill="#9cdcfe" fill-opacity="1.00"/><rect x="0" y="67" width="9" height="1" fill="#9cdcfe" fill-opacity="0.60"/><rect x="10" y="66" width="1" height="1" fill="#d4d4d4" fill-opacity="0.55"/><rect x="10" y="67" width="1" height="1" fill="#d4d4d4" fill-opacity="0.33"/><rect x="12" y="66" width="3" height="1" fill="#d4d4d4" fill-opacity="1.00"/><rect x="12" y="67" width="3" height="1" fill="#d4d4d4" fill-opacity="0.60"/><rect x="15" y="66" width="1" height="1" fill="#d4d4d4" fill-opacity="0.35"/><rect x="15" y="67" width="1" height="1" fill="#d4d4d4" fill-opacity="0.21"/><rect x="16" y="66" width="2" height="1" fill="#d4d4d4" fill-opacity="1.00"/><rect x="16" y="67" width="2" height="1" fill="#d4d4d4" fill-opacity="0.60"/><rect x="0" y="68" width="9" height="1" fill="#9cdcfe" fill-opacity="1.00"/><rect x="0" y="69" width="9" height="1" fill="#9cdcfe" fill-opacity="0.60"/><rect x="10" y="68" width="1" height="1" fill="#d4d4d4" fill-opacity="0.55"/><rect x="10" y="69" width="1" height="1" fill="#d4d4d4" fill-opacity="0.33"/><rect x="12" y="68" width="4" height="1" fill="#d4d4d4" fill-opacity="1.00"/><rect x="12" y="69" width="4" height="1" fill="#d4d4d4" fill-opacity="0.60"/><rect x="16" y="68" width="1" height="1" fill="#d4d4d4" fill-opacity="0.35"/><rect x="16" y="69" width="1" height="1" fill="#d4d4d4" fill-opacity="0.21"/><rect x="17" y="68" width="2" height="1" fill="#d4d4d4" fill-opacity="1.00"/><rect x="17" y="69" width="2" height="1" fill="#d4d4d4" fill-opacity="0.60"/><rect x="0" y="70" width="9" height="1" fill="#9cdcfe" fill-opacity="1.00"/><rect x="0" y="71" width="9" height="1" fill="#9cdcfe" fill-opacity="0.60"/><rect x="10" y="70" width="1" height="1" fill="#d4d4d4" fill-opacity="0.55"/><rect x="10" y="71" width="1" height="1" fill="#d4d4d4" fill-opacity="0.33"/><rect x="12" y="70" width="3" height="1" fill="#d4d4d4" fill-opacity="1.00"/><rect x="12" y="71" width="3" height="1" fill="#d4d4d4" fill-opacity="0.60"/><rect x="15" y="70" width="1" height="1" fill="#d4d4d4" fill-opacity="0.35"/><rect x="15" y="71" width="1" height="1" fill="#d4d4d4" fill-opacity="0.21"/><rect x="16" y="70" width="2" height="1" fill="#d4d4d4" fill-opacity="1.00"/><rect x="16" y="71" width="2" height="1" fill="#d4d4d4" fill-opacity="0.60"/><rect x="0" y="72" width="9" height="1" fill="#9cdcfe" fill-opacity="1.00"/><rect x="0" y="73" width="9" height="1" fill="#9cdcfe" fill-opacity="0.60"/><rect x="10" y="72" width="1" height="1" fill="#d4d4d4" fill-opacity="0.55"/><rect x="10" y="73" width="1" height="1" fill="#d4d4d4" fill-opacity="0.33"/><rect x="12" y="72" width="2" height="1" fill="#d4d4d4" fill-opacity="1.00"/><rect x="12" y="73" width="2" height="1" fill="#d4d4d4" fill-opacity="0.60"/><rect x="14" y="72" width="1" height="1" fill="#d4d4d4" fill-opacity="0.35"/><rect x="14" y="73" width="1" height="1" fill="#d4d4d4" fill-opacity="0.21"/><rect x="15" y="72" width="2" height="1" fill="#d4d4d4" fill-opacity="1.00"/><rect x="15" y="73" width="2" height="1" fill="#d4d4d4" fill-opacity="0.60"/><rect x="0" y="74" width="9" height="1" fill="#9cdcfe" fill-opacity="1.00"/><rect x="0" y="75" width="9" height="1" fill="#9cdcfe" fill-opacity="0.60"/><rect x="10" y="74" width="1" height="1" fill="#d4d4d4" fill-opacity="0.55"/><rect x="10" y="75" width="1" height="1" fill="#d4d4d4" fill-opacity="0.33"/><rect x="12" y="74" width="7" height="1" fill="#d4d4d4" fill-opacity="1.00"/><rect x="12" y="75" width="7" height="1" fill="#d4d4d4" fill-opacity="0.60"/><rect x="19" y="74" width="1" height="1" fill="#d4d4d4" fill-opacity="0.35"/><rect x="19" y="75" width="1" height="1" fill="#d4d4d4" fill-opacity="0.21"/><rect x="20" y="74" width="2" height="1" fill="#d4d4d4" fill-opacity="1.00"/><rect x="20" y="75" width="2" height="1" fill="#d4d4d4" fill-opacity="0.60"/><rect x="0" y="76" width="9" height="1" fill="#9cdcfe" fill-opacity="1.00"/><rect x="0" y="77" width="9" height="1" fill="#9cdcfe" fill-opacity="0.60"/><rect x="10" y="76" width="1" height="1" fill="#d4d4d4" fill-opacity="0.55"/><rect x="10" y="77" width="1" height="1" fill="#d4d4d4" fill-opacity="0.33"/><rect x="12" y="76" width="3" height="1" fill="#d4d4d4" fill-opacity="1.00"/><rect x="12" y="77" width="3" height="1" fill="#d4d4d4" fill-opacity="0.60"/><rect x="15" y="76" width="1" height="1" fill="#d4d4d4" fill-opacity="0.35"/><rect x="15" y="77" width="1" height="1" fill="#d4d4d4" fill-opacity="0.21"/><rect x="16" y="76" width="2" height="1" fill="#d4d4d4" fill-opacity="1.00"/><rect x="16" y="77" width="2" height="1" fill="#d4d4d4" fill-opacity="0.60"/><rect x="0" y="78" width="9" height="1" fill="#9cdcfe" fill-opacity="1.00"/><rect x="0" y="79" width="9" height="1" fill="#9cdcfe" fill-opacity="0.60"/><rect x="10" y="78" width="1" height="1" fill="#d4d4d4" fill-opacity="0.55"/><rect x="10" y="79" width="1" height="1" fill="#d4d4d4" fill-opacity="0.33"/><rect x="12" y="78" width="5" height="1" fill="#d4d4d4" fill-opacity="1.00"/><rect x="12" y="79" width="5" height="1" fill="#d4d4d4" fill-opacity="0.60"/><rect x="17" y="78" width="1" height="1" fill="#d4d4d4" fill-opacity="0.35"/><rect x="17" y="79" width="1" height="1" fill="#d4d4d4" fill-opacity="0.21"/><rect x="18" y="78" width="2" height="1" fill="#d4d4d4" fill-opacity="1.00"/><rect x="18" y="79" width="2" height="1" fill="#d4d4d4" fill-opacity="0.60"/><rect x="0" y="80" width="9" height="1" fill="#9cdcfe" fill-opacity="1.00"/><rect x="0" y="81" width="9" height="1" fill="#9cdcfe" fill-opacity="0.60"/><rect x="10" y="80" width="1" height="1" fill="#d4d4d4" fill-opacity="0.55"/><rect x="10" y="81" width="1" height="1" fill="#d4d4d4" fill-opacity="0.33"/><rect x="12" y="80" width="4" height="1" fill="#d4d4d4" fill-opacity="1.00"/><rect x="12" y="81" width="4" height="1" fill="#d4d4d4" fill-opacity="0.60"/><rect x="16" y="80" width="1" height="1" fill="#d4d4d4" fill-opacity="0.35"/><rect x="16" y="81" width="1" height="1" fill="#d4d4d4" fill-opacity="0.21"/><rect x="17" y="80" width="2" height="1" fill="#d4d4d4" fill-opacity="1.00"/><rect x="17" y="81" width="2" height="1" fill="#d4d4d4" fill-opacity="0.60"/><rect x="0" y="82" width="9" height="1" fill="#9cdcfe" fill-opacity="1.00"/><rect x="0" y="83" width="9" height="1" fill="#9cdcfe" fill-opacity="0.60"/><rect x="10" y="82" width="1" height="1" fill="#d4d4d4" fill-opacity="0.55"/><rect x="10" y="83" width="1" height="1" fill="#d4d4d4" fill-opacity="0.33"/><rect x="12" y="82" width="8" height="1" fill="#d4d4d4" fill-opacity="1.00"/><rect x="12" y="83" width="8" height="1" fill="#d4d4d4" fill-opacity="0.60"/><rect x="20" y="82" width="1" height="1" fill="#d4d4d4" fill-opacity="0.35"/><rect x="20" y="83" width="1" height="1" fill="#d4d4d4" fill-opacity="0.21"/><rect x="21" y="82" width="2" height="1" fill="#d4d4d4" fill-opacity="1.00"/><rect x="21" y="83" width="2" height="1" fill="#d4d4d4" fill-opacity="0.60"/><rect x="0" y="84" width="9" height="1" fill="#9cdcfe" fill-opacity="1.00"/><rect x="0" y="85" width="9" height="1" fill="#9cdcfe" fill-opacity="0.60"/><rect x="10" y="84" width="1" height="1" fill="#d4d4d4" fill-opacity="0.55"/><rect x="10" y="85" width="1" height="1" fill="#d4d4d4" fill-opacity="0.33"/><rect x="12" y="84" width="6" height="1" fill="#d4d4d4" fill-opacity="1.00"/><rect x="12" y="85" width="6" height="1" fill="#d4d4d4" fill-opacity="0.60"/><rect x="18" y="84" width="1" height="1" fill="#d4d4d4" fill-opacity="0.35"/><rect x="18" y="85" width="1" height="1" fill="#d4d4d4" fill-opacity="0.21"/><rect x="19" y="84" width="2" height="1" fill="#d4d4d4" fill-opacity="1.00"/><rect x="19" y="85" width="2" height="1" fill="#d4d4d4" fill-opacity="0.60"/><rect x="0" y="86" width="9" height="1" fill="#9cdcfe" fill-opacity="1.00"/><rect x="0" y="87" width="9" height="1" fill="#9cdcfe" fill-opacity="0.60"/><rect x="10" y="86" width="1" height="1" fill="#d4d4d4" fill-opacity="0.55"/><rect x="10" y="87" width="1" height="1" fill="#d4d4d4" fill-opacity="0.33"/><rect x="12" y="86" width="5" height="1" fill="#d4d4d4" fill-opacity="1.00"/><rect x="12" y="87" width="5" height="1" fill="#d4d4d4" fill-opacity="0.60"/><rect x="17" y="86" width="1" height="1" fill="#d4d4d4" fill-opacity="0.35"/><rect x="17" y="87" width="1" height="1" fill="#d4d4d4" fill-opacity="0.21"/><rect x="18" y="86" width="2" height="1" fill="#d4d4d4" fill-opacity="1.00"/><rect x="18" y="87" width="2" height="1" fill="#d4d4d4" fill-opacity="0.60"/><rect x="0" y="88" width="9" height="1" fill="#9cdcfe" fill-opacity="1.00"/><rect x="0" y="89" width="9" height="1" fill="#9cdcfe" fill-opacity="0.60"/><rect x="10" y="88" width="1" height="1" fill="#d4d4d4" fill-opacity="0.55"/><rect x="10" y="89" width="1" height="1" fill="#d4d4d4" fill-opacity="0.33"/><rect x="12" y="88" width="3" height="1" fill="#d4d4d4" fill-opacity="1.00"/><rect x="12" y="89" width="3" height="1" fill="#d4d4d4" fill-opacity="0.60"/><rect x="15" y="88" width="1" height="1" fill="#d4d4d4" fill-opacity="0.35"/><rect x="15" y="89" width="1" height="1" fill="#d4d4d4" fill-opacity="0.21"/><rect x="16" y="88" width="2" height="1" fill="#d4d4d4" fill-opacity="1.00"/><rect x="16" y="89" width="2" height="1" fill="#d4d4d4" fill-opacity="0.60"/><rect x="0" y="90" width="9" height="1" fill="#9cdcfe" fill-opacity="1.00"/><rect x="0" y="91" width="9" height="1" fill="#9cdcfe" fill-opacity="0.60"/><rect x="10" y="90" width="1" height="1" fill="#d4d4d4" fill-opacity="0.55"/><rect x="10" y="91" width="1" height="1" fill="#d4d4d4" fill-opacity="0.33"/><rect x="12" y="90" width="3" height="1" fill="#d4d4d4" fill-opacity="1.00"/><rect x="12" y="91" width="3" height="1" fill="#d4d4d4" fill-opacity="0.60"/><rect x="16" y="90" width="5" height="1" fill="#d4d4d4" fill-opacity="1.00"/><rect x="16" y="91" width="5" height="1" fill="#d4d4d4" fill-opacity="0.60"/><rect x="21" y="90" width="1" height="1" fill="#d4d4d4" fill-opacity="0.35"/><rect x="21" y="91" width="1" height="1" fill="#d4d4d4" fill-opacity="0.21"/><rect x="22" y="90" width="2" height="1" fill="#d4d4d4" fill-opacity="1.00"/><rect x="22" y="91" width="2" height="1" fill="#d4d4d4" fill-opacity="0.60"/><rect x="0" y="92" width="9" height="1" fill="#9cdcfe" fill-opacity="1.00"/><rect x="0" y="93" width="9" height="1" fill="#9cdcfe" fill-opacity="0.60"/><rect x="10" y="92" width="1" height="1" fill="#d4d4d4" fill-opacity="0.55"/><rect x="10" y="93" width="1" height="1" fill="#d4d4d4" fill-opacity="0.33"/><rect x="12" y="92" width="3" height="1" fill="#d4d4d4" fill-opacity="1.00"/><rect x="12" y="93" width="3" height="1" fill="#d4d4d4" fill-opacity="0.60"/><rect x="16" y="92" width="5" height="1" fill="#d4d4d4" fill-opacity="1.00"/><rect x="16" y="93" width="5" height="1" fill="#d4d4d4" fill-opacity="0.60"/><rect x="21" y="92" width="1" height="1" fill="#d4d4d4" fill-opacity="0.35"/><rect x="21" y="93" width="1" height="1" fill="#d4d4d4" fill-opacity="0.21"/><rect x="22" y="92" width="2" height="1" fill="#d4d4d4" fill-opacity="1.00"/><rect x="22" y="93" width="2" height="1" fill="#d4d4d4" fill-opacity="0.60"/><rect x="0" y="94" width="9" height="1" fill="#9cdcfe" fill-opacity="1.00"/><rect x="0" y="95" width="9" height="1" fill="#9cdcfe" fill-opacity="0.60"/><rect x="10" y="94" width="1" height="1" fill="#d4d4d4" fill-opacity="0.55"/><rect x="10" y="95" width="1" height="1" fill="#d4d4d4" fill-opacity="0.33"/><rect x="12" y="94" width="3" height="1" fill="#d4d4d4" fill-opacity="1.00"/><rect x="12" y="95" width="3" height="1" fill="#d4d4d4" fill-opacity="0.60"/><rect x="16" y="94" width="6" height="1" fill="#d4d4d4" fill-opacity="1.00"/><rect x="16" y="95" width="6" height="1" fill="#d4d4d4" fill-opacity="0.60"/><rect x="22" y="94" width="1" height="1" fill="#d4d4d4" fill-opacity="0.35"/><rect x="22" y="95" width="1" height="1" fill="#d4d4d4" fill-opacity="0.21"/><rect x="23" y="94" width="2" height="1" fill="#d4d4d4" fill-opacity="1.00"/><rect x="23" y="95" width="2" height="1" fill="#d4d4d4" fill-opacity="0.60"/><rect x="0" y="96" width="9" height="1" fill="#9cdcfe" fill-opacity="1.00"/><rect x="0" y="97" width="9" height="1" fill="#9cdcfe" fill-opacity="0.60"/><rect x="10" y="96" width="1" height="1" fill="#d4d4d4" fill-opacity="0.55"/><rect x="10" y="97" width="1" height="1" fill="#d4d4d4" fill-opacity="0.33"/><rect x="12" y="96" width="5" height="1" fill="#d4d4d4" fill-opacity="1.00"/><rect x="12" y="97" width="5" height="1" fill="#d4d4d4" fill-opacity="0.60"/><rect x="17" y="96" width="1" height="1" fill="#d4d4d4" fill-opacity="0.35"/><rect x="17" y="97" width="1" height="1" fill="#d4d4d4" fill-opacity="0.21"/><rect x="18" y="96" width="2" height="1" fill="#d4d4d4" fill-opacity="1.00"/><rect x="18" y="97" width="2" height="1" fill="#d4d4d4" fill-opacity="0.60"/><rect x="0" y="98" width="9" height="1" fill="#9cdcfe" fill-opacity="1.00"/><rect x="0" y="99" width="9" height="1" fill="#9cdcfe" fill-opacity="0.60"/><rect x="10" y="98" width="1" height="1" fill="#d4d4d4" fill-opacity="0.55"/><rect x="10" y="99" width="1" height="1" fill="#d4d4d4" fill-opacity="0.33"/><rect x="12" y="98" width="5" height="1" fill="#d4d4d4" fill-opacity="1.00"/><rect x="12" y="99" width="5" height="1" fill="#d4d4d4" fill-opacity="0.60"/><rect x="17" y="98" width="1" height="1" fill="#d4d4d4" fill-opacity="0.35"/><rect x="17" y="99" width="1" height="1" fill="#d4d4d4" fill-opacity="0.21"/><rect x="18" y="98" width="2" height="1" fill="#d4d4d4" fill-opacity="1.00"/><rect x="18" y="99" width="2" height="1" fill="#d4d4d4" fill-opacity="0.60"/><rect x="0" y="100" width="9" height="1" fill="#9cdcfe" fill-opacity="1.00"/><rect x="0" y="101" width="9" height="1" fill="#9cdcfe" fill-opacity="0.60"/><rect x="10" y="100" width="1" height="1" fill="#d4d4d4" fill-opacity="0.55"/><rect x="10" y="101" width="1" height="1" fill="#d4d4d4" fill-opacity="0.33"/><rect x="12" y="100" width="7" height="1" fill="#d4d4d4" fill-opacity="1.00"/><rect x="12" y="101" width="7" height="1" fill="#d4d4d4" fill-opacity="0.60"/><rect x="19" y="100" width="1" height="1" fill="#d4d4d4" fill-opacity="0.35"/><rect x="19" y="101" width="1" height="1" fill="#d4d4d4" fill-opacity="0.21"/><rect x="20" y="100" width="2" height="1" fill="#d4d4d4" fill-opacity="1.00"/><rect x="20" y="101" width="2" height="1" fill="#d4d4d4" fill-opacity="0.60"/><rect x="0" y="102" width="9" height="1" fill="#9cdcfe" fill-opacity="1.00"/><rect x="0" y="103" width="9" height="1" fill="#9cdcfe" fill-opacity="0.60"/><rect x="10" y="102" width="1" height="1" fill="#d4d4d4" fill-opacity="0.55"/><rect x="10" y="103" width="1" height="1" fill="#d4d4d4" fill-opacity="0.33"/><rect x="12" y="102" width="5" height="1" fill="#d4d4d4" fill-opacity="1.00"/><rect x="12" y="103" width="5" height="1" fill="#d4d4d4" fill-opacity="0.60"/><rect x="17" y="102" width="1" height="1" fill="#d4d4d4" fill-opacity="0.35"/><rect x="17" y="103" width="1" height="1" fill="#d4d4d4" fill-opacity="0.21"/><rect x="18" y="102" width="2" height="1" fill="#d4d4d4" fill-opacity="1.00"/><rect x="18" y="103" width="2" height="1" fill="#d4d4d4" fill-opacity="0.60"/><rect x="0" y="104" width="9" height="1" fill="#9cdcfe" fill-opacity="1.00"/><rect x="0" y="105" width="9" height="1" fill="#9cdcfe" fill-opacity="0.60"/><rect x="10" y="104" width="1" height="1" fill="#d4d4d4" fill-opacity="0.55"/><rect x="10" y="105" width="1" height="1" fill="#d4d4d4" fill-opacity="0.33"/><rect x="12" y="104" width="4" height="1" fill="#d4d4d4" fill-opacity="1.00"/><rect x="12" y="105" width="4" height="1" fill="#d4d4d4" fill-opacity="0.60"/><rect x="16" y="104" width="1" height="1" fill="#d4d4d4" fill-opacity="0.35"/><rect x="16" y="105" width="1" height="1" fill="#d4d4d4" fill-opacity="0.21"/><rect x="17" y="104" width="2" height="1" fill="#d4d4d4" fill-opacity="1.00"/><rect x="17" y="105" width="2" height="1" fill="#d4d4d4" fill-opacity="0.60"/><rect x="0" y="108" width="9" height="1" fill="#9cdcfe" fill-opacity="1.00"/><rect x="0" y="109" width="9" height="1" fill="#9cdcfe" fill-opacity="0.60"/><rect x="10" y="108" width="1" height="1" fill="#d4d4d4" fill-opacity="0.55"/><rect x="10" y="109" width="1" height="1" fill="#d4d4d4" fill-opacity="0.33"/><rect x="12" y="108" width="7" height="1" fill="#d4d4d4" fill-opacity="1.00"/><rect x="12" y="109" width="7" height="1" fill="#d4d4d4" fill-opacity="0.60"/><rect x="19" y="108" width="1" height="1" fill="#d4d4d4" fill-opacity="0.35"/><rect x="19" y="109" width="1" height="1" fill="#d4d4d4" fill-opacity="0.21"/><rect x="20" y="108" width="2" height="1" fill="#d4d4d4" fill-opacity="1.00"/><rect x="20" y="109" width="2" height="1" fill="#d4d4d4" fill-opacity="0.60"/><rect x="0" y="110" width="9" height="1" fill="#9cdcfe" fill-opacity="1.00"/><rect x="0" y="111" width="9" height="1" fill="#9cdcfe" fill-opacity="0.60"/><rect x="10" y="110" width="1" height="1" fill="#d4d4d4" fill-opacity="0.55"/><rect x="10" y="111" width="1" height="1" fill="#d4d4d4" fill-opacity="0.33"/><rect x="12" y="110" width="6" height="1" fill="#d4d4d4" fill-opacity="1.00"/><rect x="12" y="111" width="6" height="1" fill="#d4d4d4" fill-opacity="0.60"/><rect x="18" y="110" width="1" height="1" fill="#d4d4d4" fill-opacity="0.35"/><rect x="18" y="111" width="1" height="1" fill="#d4d4d4" fill-opacity="0.21"/><rect x="19" y="110" width="2" height="1" fill="#d4d4d4" fill-opacity="1.00"/><rect x="19" y="111" width="2" height="1" fill="#d4d4d4" fill-opacity="0.60"/><rect x="0" y="112" width="9" height="1" fill="#9cdcfe" fill-opacity="1.00"/><rect x="0" y="113" width="9" height="1" fill="#9cdcfe" fill-opacity="0.60"/><rect x="10" y="112" width="1" height="1" fill="#d4d4d4" fill-opacity="0.55"/><rect x="10" y="113" width="1" height="1" fill="#d4d4d4" fill-opacity="0.33"/><rect x="12" y="112" width="3" height="1" fill="#d4d4d4" fill-opacity="1.00"/><rect x="12" y="113" width="3" height="1" fill="#d4d4d4" fill-opacity="0.60"/><rect x="15" y="112" width="1" height="1" fill="#d4d4d4" fill-opacity="0.35"/><rect x="15" y="113" width="1" height="1" fill="#d4d4d4" fill-opacity="0.21"/><rect x="16" y="112" width="2" height="1" fill="#d4d4d4" fill-opacity="1.00"/><rect x="16" y="113" width="2" height="1" fill="#d4d4d4" fill-opacity="0.60"/><rect x="0" y="114" width="9" height="1" fill="#9cdcfe" fill-opacity="1.00"/><rect x="0" y="115" width="9" height="1" fill="#9cdcfe" fill-opacity="0.60"/><rect x="10" y="114" width="1" height="1" fill="#d4d4d4" fill-opacity="0.55"/><rect x="10" y="115" width="1" height="1" fill="#d4d4d4" fill-opacity="0.33"/><rect x="12" y="114" width="9" height="1" fill="#d4d4d4" fill-opacity="1.00"/><rect x="12" y="115" width="9" height="1" fill="#d4d4d4" fill-opacity="0.60"/><rect x="21" y="114" width="1" height="1" fill="#d4d4d4" fill-opacity="0.35"/><rect x="21" y="115" width="1" height="1" fill="#d4d4d4" fill-opacity="0.21"/><rect x="22" y="114" width="2" height="1" fill="#d4d4d4" fill-opacity="1.00"/><rect x="22" y="115" width="2" height="1" fill="#d4d4d4" fill-opacity="0.60"/><rect x="0" y="116" width="9" height="1" fill="#9cdcfe" fill-opacity="1.00"/><rect x="0" y="117" width="9" height="1" fill="#9cdcfe" fill-opacity="0.60"/><rect x="10" y="116" width="1" height="1" fill="#d4d4d4" fill-opacity="0.55"/><rect x="10" y="117" width="1" height="1" fill="#d4d4d4" fill-opacity="0.33"/><rect x="12" y="116" width="9" height="1" fill="#d4d4d4" fill-opacity="1.00"/><rect x="12" y="117" width="9" height="1" fill="#d4d4d4" fill-opacity="0.60"/><rect x="21" y="116" width="1" height="1" fill="#d4d4d4" fill-opacity="0.35"/><rect x="21" y="117" width="1" height="1" fill="#d4d4d4" fill-opacity="0.21"/><rect x="22" y="116" width="2" height="1" fill="#d4d4d4" fill-opacity="1.00"/><rect x="22" y="117" width="2" height="1" fill="#d4d4d4" fill-opacity="0.60"/><rect x="0" y="120" width="9" height="1" fill="#9cdcfe" fill-opacity="1.00"/><rect x="0" y="121" width="9" height="1" fill="#9cdcfe" fill-opacity="0.60"/><rect x="10" y="120" width="1" height="1" fill="#d4d4d4" fill-opacity="0.55"/><rect x="10" y="121" width="1" height="1" fill="#d4d4d4" fill-opacity="0.33"/><rect x="12" y="120" width="3" height="1" fill="#d4d4d4" fill-opacity="1.00"/><rect x="12" y="121" width="3" height="1" fill="#d4d4d4" fill-opacity="0.60"/><rect x="15" y="120" width="1" height="1" fill="#d4d4d4" fill-opacity="0.35"/><rect x="15" y="121" width="1" height="1" fill="#d4d4d4" fill-opacity="0.21"/><rect x="16" y="120" width="2" height="1" fill="#d4d4d4" fill-opacity="1.00"/><rect x="16" y="121" width="2" height="1" fill="#d4d4d4" fill-opacity="0.60"/><rect x="0" y="122" width="9" height="1" fill="#9cdcfe" fill-opacity="1.00"/><rect x="0" y="123" width="9" height="1" fill="#9cdcfe" fill-opacity="0.60"/><rect x="10" y="122" width="1" height="1" fill="#d4d4d4" fill-opacity="0.55"/><rect x="10" y="123" width="1" height="1" fill="#d4d4d4" fill-opacity="0.33"/><rect x="12" y="122" width="3" height="1" fill="#d4d4d4" fill-opacity="1.00"/><rect x="12" y="123" width="3" height="1" fill="#d4d4d4" fill-opacity="0.60"/><rect x="15" y="122" width="1" height="1" fill="#d4d4d4" fill-opacity="0.35"/><rect x="15" y="123" width="1" height="1" fill="#d4d4d4" fill-opacity="0.21"/><rect x="16" y="122" width="2" height="1" fill="#d4d4d4" fill-opacity="1.00"/><rect x="16" y="123" width="2" height="1" fill="#d4d4d4" fill-opacity="0.60"/><rect x="0" y="124" width="9" height="1" fill="#9cdcfe" fill-opacity="1.00"/><rect x="0" y="125" width="9" height="1" fill="#9cdcfe" fill-opacity="0.60"/><rect x="10" y="124" width="1" height="1" fill="#d4d4d4" fill-opacity="0.55"/><rect x="10" y="125" width="1" height="1" fill="#d4d4d4" fill-opacity="0.33"/><rect x="12" y="124" width="5" height="1" fill="#d4d4d4" fill-opacity="1.00"/><rect x="12" y="125" width="5" height="1" fill="#d4d4d4" fill-opacity="0.60"/><rect x="17" y="124" width="1" height="1" fill="#d4d4d4" fill-opacity="0.35"/><rect x="17" y="125" width="1" height="1" fill="#d4d4d4" fill-opacity="0.21"/><rect x="18" y="124" width="2" height="1" fill="#d4d4d4" fill-opacity="1.00"/><rect x="18" y="125" width="2" height="1" fill="#d4d4d4" fill-opacity="0.60"/><rect x="0" y="126" width="9" height="1" fill="#9cdcfe" fill-opacity="1.00"/><rect x="0" y="127" width="9" height="1" fill="#9cdcfe" fill-opacity="0.60"/><rect x="10" y="126" width="1" height="1" fill="#d4d4d4" fill-opacity="0.55"/><rect x="10" y="127" width="1" height="1" fill="#d4d4d4" fill-opacity="0.33"/><rect x="12" y="126" width="7" height="1" fill="#d4d4d4" fill-opacity="1.00"/><rect x="12" y="127" width="7" height="1" fill="#d4d4d4" fill-opacity="0.60"/><rect x="19" y="126" width="1" height="1" fill="#d4d4d4" fill-opacity="0.35"/><rect x="19" y="127" width="1" height="1" fill="#d4d4d4" fill-opacity="0.21"/><rect x="20" y="126" width="2" height="1" fill="#d4d4d4" fill-opacity="1.00"/><rect x="20" y="127" width="2" height="1" fill="#d4d4d4" fill-opacity="0.60"/><rect x="0" y="128" width="9" height="1" fill="#9cdcfe" fill-opacity="1.00"/><rect x="0" y="129" width="9" height="1" fill="#9cdcfe" fill-opacity="0.60"/><rect x="10" y="128" width="1" height="1" fill="#d4d4d4" fill-opacity="0.55"/><rect x="10" y="129" width="1" height="1" fill="#d4d4d4" fill-opacity="0.33"/><rect x="12" y="128" width="4" height="1" fill="#d4d4d4" fill-opacity="1.00"/><rect x="12" y="129" width="4" height="1" fill="#d4d4d4" fill-opacity="0.60"/><rect x="16" y="128" width="1" height="1" fill="#d4d4d4" fill-opacity="0.35"/><rect x="16" y="129" width="1" height="1" fill="#d4d4d4" fill-opacity="0.21"/><rect x="17" y="128" width="2" height="1" fill="#d4d4d4" fill-opacity="1.00"/><rect x="17" y="129" width="2" height="1" fill="#d4d4d4" fill-opacity="0.60"/><rect x="0" y="130" width="9" height="1" fill="#9cdcfe" fill-opacity="1.00"/><rect x="0" y="131" width="9" height="1" fill="#9cdcfe" fill-opacity="0.60"/><rect x="10" y="130" width="1" height="1" fill="#d4d4d4" fill-opacity="0.55"/><rect x="10" y="131" width="1" height="1" fill="#d4d4d4" fill-opacity="0.33"/><rect x="12" y="130" width="9" height="1" fill="#d4d4d4" fill-opacity="1.00"/><rect x="12" y="131" width="9" height="1" fill="#d4d4d4" fill-opacity="0.60"/><rect x="21" y="130" width="1" height="1" fill="#d4d4d4" fill-opacity="0.35"/><rect x="21" y="131" width="1" height="1" fill="#d4d4d4" fill-opacity="0.21"/><rect x="22" y="130" width="2" height="1" fill="#d4d4d4" fill-opacity="1.00"/><rect x="22" y="131" width="2" height="1" fill="#d4d4d4" fill-opacity="0.60"/><rect x="0" y="136" width="1" height="1" fill="#6a9955" fill-opacity="0.35"/><rect x="0" y="137" width="1" height="1" fill="#6a9955" fill-opacity="0.21"/><rect x="2" y="136" width="4" height="1" fill="#6a9955" fill-opacity="1.00"/><rect x="2" y="137" width="4" height="1" fill="#6a9955" fill-opacity="0.60"/><rect x="7" y="136" width="10" height="1" fill="#6a9955" fill-opacity="1.00"/><rect x="7" y="137" width="10" height="1" fill="#6a9955" fill-opacity="0.60"/><rect x="0" y="138" width="4" height="1" fill="#9cdcfe" fill-opacity="1.00"/><rect x="0" y="139" width="4" height="1" fill="#9cdcfe" fill-opacity="0.60"/><rect x="5" y="138" width="9" height="1" fill="#9cdcfe" fill-opacity="1.00"/><rect x="5" y="139" width="9" height="1" fill="#9cdcfe" fill-opacity="0.60"/><rect x="15" y="138" width="1" height="1" fill="#d4d4d4" fill-opacity="0.55"/><rect x="15" y="139" width="1" height="1" fill="#d4d4d4" fill-opacity="0.33"/><rect x="17" y="138" width="1" height="1" fill="#d4d4d4" fill-opacity="0.80"/><rect x="17" y="139" width="1" height="1" fill="#d4d4d4" fill-opacity="0.48"/><rect x="18" y="138" width="3" height="1" fill="#d4d4d4" fill-opacity="1.00"/><rect x="18" y="139" width="3" height="1" fill="#d4d4d4" fill-opacity="0.60"/><rect x="21" y="138" width="1" height="1" fill="#d4d4d4" fill-opacity="0.80"/><rect x="21" y="139" width="1" height="1" fill="#d4d4d4" fill-opacity="0.48"/><rect x="22" y="138" width="10" height="1" fill="#d4d4d4" fill-opacity="1.00"/><rect x="22" y="139" width="10" height="1" fill="#d4d4d4" fill-opacity="0.60"/><rect x="32" y="138" width="1" height="1" fill="#d4d4d4" fill-opacity="0.80"/><rect x="32" y="139" width="1" height="1" fill="#d4d4d4" fill-opacity="0.48"/><rect x="33" y="138" width="3" height="1" fill="#d4d4d4" fill-opacity="1.00"/><rect x="33" y="139" width="3" height="1" fill="#d4d4d4" fill-opacity="0.60"/><rect x="36" y="138" width="1" height="1" fill="#d4d4d4" fill-opacity="0.80"/><rect x="36" y="139" width="1" height="1" fill="#d4d4d4" fill-opacity="0.48"/><rect x="37" y="138" width="1" height="1" fill="#b5cea8" fill-opacity="1.00"/><rect x="37" y="139" width="1" height="1" fill="#b5cea8" fill-opacity="0.60"/><rect x="38" y="138" width="1" height="1" fill="#d4d4d4" fill-opacity="0.35"/><rect x="38" y="139" width="1" height="1" fill="#d4d4d4" fill-opacity="0.21"/><rect x="39" y="138" width="1" height="1" fill="#b5cea8" fill-opacity="1.00"/><rect x="39" y="139" width="1" height="1" fill="#b5cea8" fill-opacity="0.60"/><rect x="40" y="138" width="1" height="1" fill="#d4d4d4" fill-opacity="0.80"/><rect x="40" y="139" width="1" height="1" fill="#d4d4d4" fill-opacity="0.48"/><rect x="41" y="138" width="3" height="1" fill="#d4d4d4" fill-opacity="1.00"/><rect x="41" y="139" width="3" height="1" fill="#d4d4d4" fill-opacity="0.60"/><rect x="44" y="138" width="1" height="1" fill="#d4d4d4" fill-opacity="0.80"/><rect x="44" y="139" width="1" height="1" fill="#d4d4d4" fill-opacity="0.48"/><rect x="45" y="138" width="3" height="1" fill="#d4d4d4" fill-opacity="1.00"/><rect x="45" y="139" width="3" height="1" fill="#d4d4d4" fill-opacity="0.60"/><rect x="48" y="138" width="1" height="1" fill="#d4d4d4" fill-opacity="0.80"/><rect x="48" y="139" width="1" height="1" fill="#d4d4d4" fill-opacity="0.48"/><rect x="49" y="138" width="10" height="1" fill="#d4d4d4" fill-opacity="1.00"/><rect x="49" y="139" width="10" height="1" fill="#d4d4d4" fill-opacity="0.60"/><rect x="59" y="138" width="1" height="1" fill="#d4d4d4" fill-opacity="0.80"/><rect x="59" y="139" width="1" height="1" fill="#d4d4d4" fill-opacity="0.48"/><rect x="60" y="138" width="2" height="1" fill="#d4d4d4" fill-opacity="1.00"/><rect x="60" y="139" width="2" height="1" fill="#d4d4d4" fill-opacity="0.60"/><rect x="62" y="138" width="1" height="1" fill="#d4d4d4" fill-opacity="0.55"/><rect x="62" y="139" width="1" height="1" fill="#d4d4d4" fill-opacity="0.33"/><rect x="63" y="138" width="5" height="1" fill="#d4d4d4" fill-opacity="1.00"/><rect x="63" y="139" width="5" height="1" fill="#d4d4d4" fill-opacity="0.60"/><rect x="68" y="138" width="1" height="1" fill="#d4d4d4" fill-opacity="0.55"/><rect x="68" y="139" width="1" height="1" fill="#d4d4d4" fill-opacity="0.33"/><rect x="69" y="138" width="3" height="1" fill="#d4d4d4" fill-opacity="1.00"/><rect x="69" y="139" width="3" height="1" fill="#d4d4d4" fill-opacity="0.60"/><rect x="72" y="138" width="1" height="1" fill="#d4d4d4" fill-opacity="0.55"/><rect x="72" y="139" width="1" height="1" fill="#d4d4d4" fill-opacity="0.33"/><rect x="73" y="138" width="3" height="1" fill="#d4d4d4" fill-opacity="1.00"/><rect x="73" y="139" width="3" height="1" fill="#d4d4d4" fill-opacity="0.60"/><rect x="76" y="138" width="1" height="1" fill="#d4d4d4" fill-opacity="0.55"/><rect x="76" y="139" width="1" height="1" fill="#d4d4d4" fill-opacity="0.33"/><rect x="77" y="138" width="8" height="1" fill="#b5cea8" fill-opacity="1.00"/><rect x="77" y="139" width="8" height="1" fill="#b5cea8" fill-opacity="0.60"/><rect x="85" y="138" width="1" height="1" fill="#d4d4d4" fill-opacity="0.80"/><rect x="85" y="139" width="1" height="1" fill="#d4d4d4" fill-opacity="0.48"/><rect x="86" y="138" width="7" height="1" fill="#d4d4d4" fill-opacity="1.00"/><rect x="86" y="139" width="7" height="1" fill="#d4d4d4" fill-opacity="0.60"/><rect x="93" y="138" width="1" height="1" fill="#d4d4d4" fill-opacity="0.35"/><rect x="93" y="139" width="1" height="1" fill="#d4d4d4" fill-opacity="0.21"/><rect x="94" y="138" width="2" height="1" fill="#d4d4d4" fill-opacity="1.00"/><rect x="94" y="139" width="2" height="1" fill="#d4d4d4" fill-opacity="0.60"/><rect x="0" y="140" width="7" height="1" fill="#d4d4d4" fill-opacity="1.00"/><rect x="0" y="141" width="7" height="1" fill="#d4d4d4" fill-opacity="0.60"/><rect x="7" y="140" width="1" height="1" fill="#d4d4d4" fill-opacity="0.35"/><rect x="7" y="141" width="1" height="1" fill="#d4d4d4" fill-opacity="0.21"/><rect x="8" y="140" width="8" height="1" fill="#9cdcfe" fill-opacity="1.00"/><rect x="8" y="141" width="8" height="1" fill="#9cdcfe" fill-opacity="0.60"/><rect x="17" y="140" width="4" height="1" fill="#9cdcfe" fill-opacity="1.00"/><rect x="17" y="141" width="4" height="1" fill="#9cdcfe" fill-opacity="0.60"/><rect x="22" y="140" width="1" height="1" fill="#d4d4d4" fill-opacity="0.55"/><rect x="22" y="141" width="1" height="1" fill="#d4d4d4" fill-opacity="0.33"/><rect x="24" y="140" width="1" height="1" fill="#d4d4d4" fill-opacity="0.80"/><rect x="24" y="141" width="1" height="1" fill="#d4d4d4" fill-opacity="0.48"/><rect x="25" y="140" width="4" height="1" fill="#d4d4d4" fill-opacity="1.00"/><rect x="25" y="141" width="4" height="1" fill="#d4d4d4" fill-opacity="0.60"/><rect x="29" y="140" width="1" height="1" fill="#d4d4d4" fill-opacity="0.80"/><rect x="29" y="141" width="1" height="1" fill="#d4d4d4" fill-opacity="0.48"/><rect x="30" y="140" width="5" height="1" fill="#d4d4d4" fill-opacity="1.00"/><rect x="30" y="141" width="5" height="1" fill="#d4d4d4" fill-opacity="0.60"/><rect x="35" y="140" width="1" height="1" fill="#d4d4d4" fill-opacity="0.55"/><rect x="35" y="141" width="1" height="1" fill="#d4d4d4" fill-opacity="0.33"/><rect x="36" y="140" width="4" height="1" fill="#d4d4d4" fill-opacity="1.00"/><rect x="36" y="141" width="4" height="1" fill="#d4d4d4" fill-opacity="0.60"/><rect x="40" y="140" width="1" height="1" fill="#d4d4d4" fill-opacity="0.80"/><rect x="40" y="141" width="1" height="1" fill="#d4d4d4" fill-opacity="0.48"/><rect x="41" y="140" width="5" height="1" fill="#d4d4d4" fill-opacity="1.00"/><rect x="41" y="141" width="5" height="1" fill="#d4d4d4" fill-opacity="0.60"/><rect x="46" y="140" width="1" height="1" fill="#d4d4d4" fill-opacity="0.80"/><rect x="46" y="141" width="1" height="1" fill="#d4d4d4" fill-opacity="0.48"/><rect x="47" y="140" width="3" height="1" fill="#d4d4d4" fill-opacity="1.00"/><rect x="47" y="141" width="3" height="1" fill="#d4d4d4" fill-opacity="0.60"/></svg>
  <div class="sbline"></div>
  <div class="slider"></div>
  <div class="sbmark"></div>
  <svg style="left:0;top:0" width="1482" height="751"><g stroke="#fff" stroke-width="1.3" fill="none"><path d="M1031,602.5 H1033.2 Q1034.5,602.5 1034.5,603.8 V616.2 Q1034.5,617.5 1033.2,617.5 H1031 M1038,602.5 H1035.8 Q1034.5,602.5 1034.5,603.8 M1038,617.5 H1035.8 Q1034.5,617.5 1034.5,616.2"/></g></svg>
</div>
</body></html>
